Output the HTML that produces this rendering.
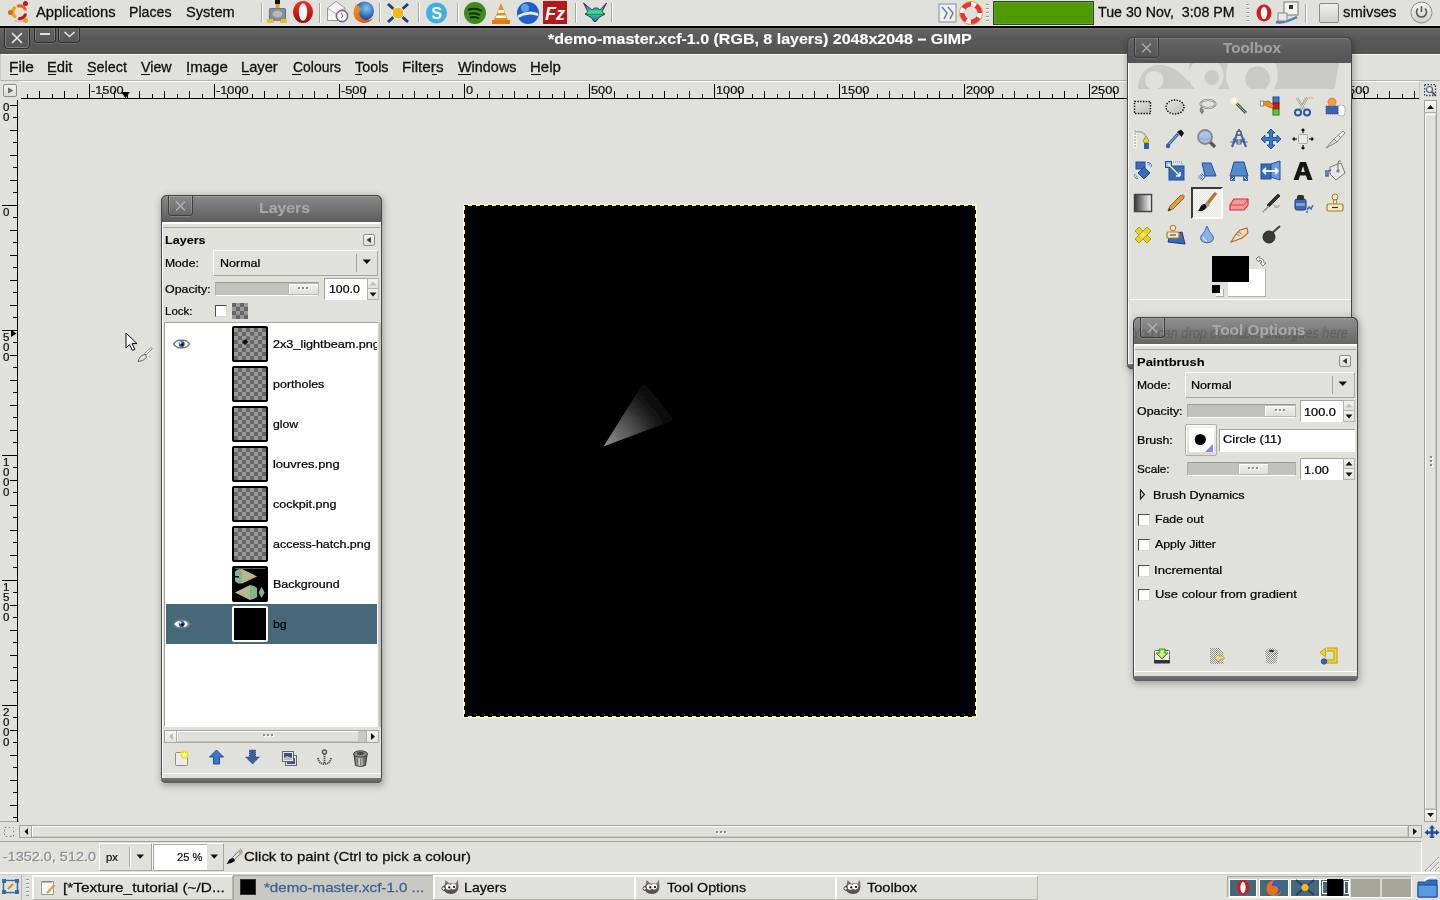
<!DOCTYPE html>
<html><head><meta charset="utf-8"><style>
html,body{margin:0;padding:0;width:1440px;height:900px;overflow:hidden;background:#e1e1dc;}
body{position:relative;font-family:"Liberation Sans",sans-serif;}
.a{position:absolute;box-sizing:border-box;}
.t{position:absolute;line-height:1;white-space:pre;transform-origin:0 0;}
</style></head><body>
<div class="a" style="left:0px;top:0px;width:1440px;height:26px;background:#e1e1dc;border-bottom:1px solid #ecece8;"></div>
<div class="a" style="left:0px;top:26px;width:1440px;height:2px;background:#000;"></div>
<svg class="a" style="left:0px;top:0px;" width="32" height="26" viewBox="0 0 32 26"><ellipse cx="20" cy="21" rx="6" ry="1.5" fill="#000" opacity="0.12"/><path d="M16.5 5.3 A7 7 0 0 1 27 10.5 L24 10.5 A4.3 4.3 0 0 0 17.8 7.9 Z" fill="#e8641a"/><path d="M14.5 6 A7 7 0 0 0 15.5 18.5 L17 16 A4.3 4.3 0 0 1 16.5 8.3 Z" fill="#e8a416"/><path d="M17.5 19.5 A7 7 0 0 0 27 13.5 L24 13.5 A4.3 4.3 0 0 1 18.8 16.9 Z" fill="#c8102e"/><circle cx="25.5" cy="3.5" r="2.5" fill="#c8102e"/><circle cx="10.4" cy="12.4" r="2.5" fill="#e8641a"/><circle cx="25.5" cy="20.4" r="2.5" fill="#e8a416"/></svg>
<div class="t" style="left:36.00px;top:5.00px;font-size:14px;font-weight:400;color:#101010;transform:scaleX(1.0531);-webkit-text-stroke:0.29px currentColor;">Applications</div>
<div class="t" style="left:128.99px;top:5.00px;font-size:14px;font-weight:400;color:#101010;transform:scaleX(1.0117);-webkit-text-stroke:0.29px currentColor;">Places</div>
<div class="t" style="left:186.00px;top:5.00px;font-size:14px;font-weight:400;color:#101010;transform:scaleX(1.0432);-webkit-text-stroke:0.29px currentColor;">System</div>
<div class="a" style="left:261px;top:3px;width:1px;height:20px;background:#a9a8a2;border-right:1px solid #fff;width:2px;"></div>
<div class="a" style="left:319px;top:3px;width:1px;height:20px;background:#a9a8a2;border-right:1px solid #fff;width:2px;"></div>
<div class="a" style="left:379px;top:3px;width:1px;height:20px;background:#a9a8a2;border-right:1px solid #fff;width:2px;"></div>
<div class="a" style="left:418px;top:3px;width:1px;height:20px;background:#a9a8a2;border-right:1px solid #fff;width:2px;"></div>
<div class="a" style="left:457px;top:3px;width:1px;height:20px;background:#a9a8a2;border-right:1px solid #fff;width:2px;"></div>
<div class="a" style="left:575px;top:3px;width:1px;height:20px;background:#a9a8a2;border-right:1px solid #fff;width:2px;"></div>
<div class="a" style="left:611px;top:3px;width:1px;height:20px;background:#a9a8a2;border-right:1px solid #fff;width:2px;"></div>
<svg class="a" style="left:266px;top:0px;" width="22" height="25" viewBox="0 0 22 25"><rect x="9" y="0" width="5" height="4" fill="#111"/><rect x="9.5" y="4" width="4" height="4" fill="#c8a820"/><rect x="3.5" y="8.5" width="16" height="11" rx="1" fill="#8a8e90" stroke="#5a7aa8" stroke-width="1.2"/><ellipse cx="11.5" cy="14" rx="5" ry="3.5" fill="#b8b8b8"/><rect x="1" y="19" width="7" height="4" rx="1" fill="#e8c020"/><rect x="14" y="19" width="7" height="4" rx="1" fill="#e8c020"/><rect x="7" y="19" width="8" height="2" fill="#888"/></svg>
<svg class="a" style="left:292px;top:0px;" width="22" height="25" viewBox="0 0 22 25"><defs><linearGradient id="og" x1="0" y1="0" x2="0" y2="1"><stop offset="0" stop-color="#ff2a2a"/><stop offset="1" stop-color="#a00808"/></linearGradient></defs><ellipse cx="11" cy="12" rx="10" ry="11" fill="url(#og)"/><ellipse cx="11" cy="12" rx="4.2" ry="8.8" fill="#fbf4f4"/></svg>
<svg class="a" style="left:326px;top:0px;" width="24" height="25" viewBox="0 0 24 25"><path d="M1.5 8 L10 1.5 L19 8 L19 20.5 L1.5 20.5 Z" fill="#f4f4f2" stroke="#999" stroke-width="1"/><path d="M1.5 8 L10 14 L19 8" stroke="#aaa" fill="none"/><circle cx="16" cy="16" r="5.6" fill="#fafafa" stroke="#8a5aaa" stroke-width="1.6"/><path d="M15 13 L17 16 L15 18" stroke="#555" stroke-width="0.9" fill="none"/></svg>
<svg class="a" style="left:351px;top:0px;" width="25" height="25" viewBox="0 0 25 25"><defs><radialGradient id="ffg" cx="0.6" cy="0.35" r="0.6"><stop offset="0" stop-color="#7ac8f0"/><stop offset="1" stop-color="#1a4aa8"/></radialGradient><linearGradient id="ffo" x1="0" y1="0" x2="1" y2="1"><stop offset="0" stop-color="#f0a020"/><stop offset="1" stop-color="#d8400a"/></linearGradient></defs><circle cx="13.5" cy="11" r="9.5" fill="url(#ffg)"/><path d="M5 4 Q2 9 2.5 14 Q4 22 12.5 23 Q21 23 23.5 15 Q23 19 18 20 Q11 21 8.5 15 Q7.5 11 11 9 Q8 8 8 5 Q6.5 6.5 6 6 Z" fill="url(#ffo)"/></svg>
<svg class="a" style="left:385px;top:1px;" width="26" height="24" viewBox="0 0 26 24"><path d="M3 3 L23 21 M23 3 L3 21" stroke="#1f3f7a" stroke-width="3"/><circle cx="13" cy="12" r="6" fill="#f3b71b" stroke="#fff" stroke-width="1"/></svg>
<svg class="a" style="left:424px;top:1px;" width="25" height="24" viewBox="0 0 25 24"><circle cx="12.5" cy="12" r="10.5" fill="#3db0e8"/><text x="12.5" y="18" font-family="Liberation Sans" font-weight="700" font-size="16" fill="#fff" text-anchor="middle">S</text></svg>
<svg class="a" style="left:463px;top:1px;" width="24" height="24" viewBox="0 0 24 24"><circle cx="12" cy="12" r="11" fill="#3e8a1c"/><path d="M5 9 Q12 6 19 10 M6 13 Q12 11 17 14 M7 16.5 Q12 15 16 17.5" stroke="#112b06" stroke-width="2" fill="none"/></svg>
<svg class="a" style="left:491px;top:1px;" width="20" height="24" viewBox="0 0 20 24"><path d="M10 2 L17 19 L3 19 Z" fill="#f28a16"/><path d="M7.5 9 L12.5 9 L13.5 12 L6.5 12 Z M5.5 14.5 L14.5 14.5 L15.5 17 L4.5 17Z" fill="#fff"/><rect x="1" y="19" width="18" height="4" fill="#e07a10"/></svg>
<svg class="a" style="left:516px;top:1px;" width="24" height="24" viewBox="0 0 24 24"><circle cx="12" cy="12" r="11" fill="#1e5fc8"/><path d="M2 14 Q12 8 22 12 L22 15 Q12 11 2 17Z" fill="#fff" opacity="0.85"/><circle cx="9" cy="7" r="4" fill="#8fc4ff" opacity="0.6"/></svg>
<svg class="a" style="left:543px;top:1px;" width="24" height="24" viewBox="0 0 24 24"><rect x="0" y="0" width="24" height="23" fill="#b41818"/><text x="12" y="19" font-family="Liberation Sans" font-style="italic" font-weight="700" font-size="18" fill="#fff" text-anchor="middle">Fz</text></svg>
<svg class="a" style="left:582px;top:2px;" width="26" height="20" viewBox="0 0 26 20"><defs><linearGradient id="bd" x1="0" y1="0" x2="0" y2="1"><stop offset="0" stop-color="#3a2ad0"/><stop offset="0.5" stop-color="#3ee0b0"/><stop offset="1" stop-color="#2a60a0"/></linearGradient></defs><path d="M1.5 1 L10 8 L12.5 6 L15.5 6 L18 8 L24.5 1 L20 10 L23 12 L17 15.5 L14 19.5 L12 19.5 L9 15.5 L3 12 L6 10 Z" fill="url(#bd)" stroke="#1a2a30" stroke-width="0.8"/><path d="M4 12 L22 12" stroke="#1a3a20" stroke-width="1.2"/><path d="M5 11.5 L21 11.5" stroke="#40d060" stroke-width="1.6"/></svg>
<svg class="a" style="left:938px;top:3px;" width="19" height="20" viewBox="0 0 19 20"><rect x="1" y="1" width="17" height="18" fill="#f0f0f0" stroke="#7d8ca8"/><path d="M4 4 L9 10 L6 16 M10 4 L15 10 L12 16" stroke="#6a7a9a" stroke-width="1.5" fill="none"/></svg>
<svg class="a" style="left:959px;top:1px;" width="24" height="24" viewBox="0 0 24 24"><circle cx="12" cy="12" r="9" fill="none" stroke="#e33" stroke-width="5"/><circle cx="12" cy="12" r="9" fill="none" stroke="#fff" stroke-width="5" stroke-dasharray="5 9.1"/><circle cx="12" cy="12" r="11.5" fill="none" stroke="#d9b040" stroke-width="1"/></svg>
<div class="a" style="left:986px;top:4px;width:3px;height:18px;background:repeating-linear-gradient(#999 0 1px,#fff 1px 2px,transparent 2px 4px);"></div>
<div class="a" style="left:993px;top:1px;width:101px;height:24px;background:#4e9a06;border:1px solid #3b3b3b;box-shadow:inset 0 0 0 1px #5aa80a;"></div>
<div class="t" style="left:1098.00px;top:5.00px;font-size:14px;font-weight:400;color:#101010;transform:scaleX(1.0152);-webkit-text-stroke:0.29px currentColor;">Tue 30 Nov,  3:08 PM</div>
<div class="a" style="left:1246px;top:4px;width:3px;height:18px;background:repeating-linear-gradient(#999 0 1px,#fff 1px 2px,transparent 2px 4px);"></div>
<svg class="a" style="left:1255px;top:4px;" width="18" height="18" viewBox="0 0 18 18"><ellipse cx="9" cy="9" rx="7.5" ry="8.5" fill="#d31a1a"/><ellipse cx="9" cy="9" rx="3.2" ry="6.3" fill="#fff"/></svg>
<svg class="a" style="left:1275px;top:1px;" width="25" height="24" viewBox="0 0 25 24"><rect x="9" y="1" width="14" height="13" fill="#f4f4f4" stroke="#777"/><rect x="14" y="4" width="4" height="4" fill="#333"/><path d="M1 21 Q8 23 22 16" stroke="#4a7ac0" stroke-width="2.5" fill="none"/><rect x="3" y="12" width="9" height="8" fill="#e8e8e8" stroke="#888"/></svg>
<div class="a" style="left:1305px;top:4px;width:2px;height:19px;background:#a9a8a2;border-right:1px solid #fff;"></div>
<div class="a" style="left:1319px;top:3px;width:20px;height:20px;background:linear-gradient(#f0f0ee,#cfcfca);border:1px solid #8a8a84;border-radius:2px;"></div>
<div class="t" style="left:1343.00px;top:5.00px;font-size:14px;font-weight:400;color:#101010;transform:scaleX(1.0582);-webkit-text-stroke:0.29px currentColor;">smivses</div>
<svg class="a" style="left:1410px;top:1px;" width="24" height="24" viewBox="0 0 24 24"><circle cx="11.5" cy="11.5" r="10.5" fill="url(#pg)" stroke="#8c8c86"/><defs><linearGradient id="pg" x1="0" y1="0" x2="0" y2="1"><stop offset="0" stop-color="#f8f8f6"/><stop offset="1" stop-color="#cfcfca"/></linearGradient></defs><path d="M8 7.5 A5 5 0 1 0 15 7.5" stroke="#555" stroke-width="1.6" fill="none"/><path d="M11.5 5 V11" stroke="#555" stroke-width="1.6"/></svg>
<div class="a" style="left:0px;top:28px;width:1440px;height:26px;background:linear-gradient(#636363,#595959 40%,#545454);border-top:1px solid #6e6e6e;"></div>
<div class="t" style="left:548.00px;top:32.00px;font-size:14.5px;font-weight:700;color:#ffffff;transform:scaleX(1.1043);-webkit-text-stroke:0.12px currentColor;">*demo-master.xcf-1.0 (RGB, 8 layers) 2048x2048 – GIMP</div>
<div class="a" style="left:4px;top:28px;width:26px;height:21px;border:1px solid #2e2e2e;border-top:none;border-radius:0 0 4px 4px;box-shadow:inset 1px 0 0 #7a7a7a,inset -1px 0 0 #7a7a7a,inset 0 -1px 0 #787878,0 1px 0 #6f6f6f;"></div>
<svg class="a" style="left:9px;top:30px;" width="16" height="16" viewBox="0 0 16 16"><path d="M3 3 L13 13 M13 3 L3 13" stroke="#e8e8e8" stroke-width="1.6"/></svg>
<div class="a" style="left:34px;top:28px;width:22px;height:15px;border:1px solid #2e2e2e;border-top:none;border-radius:0 0 4px 4px;box-shadow:inset 1px 0 0 #7a7a7a,inset -1px 0 0 #7a7a7a,0 1px 0 #6f6f6f;"></div>
<div class="a" style="left:40px;top:33px;width:10px;height:2px;background:#e0e0e0;"></div>
<div class="a" style="left:58px;top:28px;width:22px;height:15px;border:1px solid #2e2e2e;border-top:none;border-radius:0 0 4px 4px;box-shadow:inset 1px 0 0 #7a7a7a,inset -1px 0 0 #7a7a7a,0 1px 0 #6f6f6f;"></div>
<svg class="a" style="left:62.5px;top:30px;" width="13" height="9" viewBox="0 0 13 9"><path d="M1.5 2 L6.5 6.5 L11.5 2" stroke="#e0e0e0" stroke-width="1.6" fill="none"/></svg>
<div class="a" style="left:0px;top:54px;width:1440px;height:27px;background:#e1e1dc;border-top:1px solid #fbfbfa;border-bottom:1px solid #b4b4ad;"></div>
<div class="a" style="left:0px;top:54px;width:1px;height:27px;background:#c9c9c4;"></div>
<div class="t" style="left:8.90px;top:60.00px;font-size:14px;font-weight:400;color:#101010;transform:scaleX(1.1023);-webkit-text-stroke:0.29px currentColor;">File</div>
<div class="t" style="left:47.45px;top:60.00px;font-size:14px;font-weight:400;color:#101010;transform:scaleX(1.0545);-webkit-text-stroke:0.29px currentColor;">Edit</div>
<div class="t" style="left:87.00px;top:60.00px;font-size:14px;font-weight:400;color:#101010;transform:scaleX(1.0251);-webkit-text-stroke:0.29px currentColor;">Select</div>
<div class="t" style="left:141.00px;top:60.00px;font-size:14px;font-weight:400;color:#101010;transform:scaleX(1.0167);-webkit-text-stroke:0.29px currentColor;">View</div>
<div class="t" style="left:185.92px;top:60.00px;font-size:14px;font-weight:400;color:#101010;transform:scaleX(1.0754);-webkit-text-stroke:0.29px currentColor;">Image</div>
<div class="t" style="left:240.95px;top:60.00px;font-size:14px;font-weight:400;color:#101010;transform:scaleX(1.0478);-webkit-text-stroke:0.29px currentColor;">Layer</div>
<div class="t" style="left:292.50px;top:60.00px;font-size:14px;font-weight:400;color:#101010;transform:scaleX(0.9950);-webkit-text-stroke:0.29px currentColor;">Colours</div>
<div class="t" style="left:355.00px;top:60.00px;font-size:14px;font-weight:400;color:#101010;transform:scaleX(1.0250);-webkit-text-stroke:0.29px currentColor;">Tools</div>
<div class="t" style="left:401.91px;top:60.00px;font-size:14px;font-weight:400;color:#101010;transform:scaleX(1.0913);-webkit-text-stroke:0.29px currentColor;">Filters</div>
<div class="t" style="left:458.00px;top:60.00px;font-size:14px;font-weight:400;color:#101010;transform:scaleX(1.0301);-webkit-text-stroke:0.29px currentColor;">Windows</div>
<div class="t" style="left:529.93px;top:60.00px;font-size:14px;font-weight:400;color:#101010;transform:scaleX(1.0712);-webkit-text-stroke:0.29px currentColor;">Help</div>
<div class="a" style="left:10px;top:74px;width:8px;height:1px;background:#101010;"></div>
<div class="a" style="left:48px;top:74px;width:8px;height:1px;background:#101010;"></div>
<div class="a" style="left:87px;top:74px;width:8px;height:1px;background:#101010;"></div>
<div class="a" style="left:141px;top:74px;width:8.5px;height:1px;background:#101010;"></div>
<div class="a" style="left:187px;top:74px;width:4px;height:1px;background:#101010;"></div>
<div class="a" style="left:242px;top:74px;width:7.5px;height:1px;background:#101010;"></div>
<div class="a" style="left:292px;top:74px;width:9px;height:1px;background:#101010;"></div>
<div class="a" style="left:355px;top:74px;width:7px;height:1px;background:#101010;"></div>
<div class="a" style="left:432px;top:74px;width:5px;height:1px;background:#101010;"></div>
<div class="a" style="left:458px;top:74px;width:12.5px;height:1px;background:#101010;"></div>
<div class="a" style="left:531px;top:74px;width:9.5px;height:1px;background:#101010;"></div>
<div class="a" style="left:0px;top:81px;width:20px;height:19px;background:#e1e1dc;"></div>
<div class="a" style="left:3px;top:84px;width:14px;height:13px;border:1px solid #8d8d87;border-radius:2px;background:linear-gradient(#f2f2ef,#dcdcd6);"></div>
<svg class="a" style="left:6px;top:86px;" width="9" height="9" viewBox="0 0 9 9"><path d="M2 1.5 L7.5 4.5 L2 7.5 Z" fill="#6a6a66"/></svg>
<div class="a" style="left:20px;top:81px;width:1400px;height:19px;background:#e1e1dc;border-top:1px solid #fff;border-right:1px solid #c8c8c2;"></div>
<svg class="a" style="left:20px;top:81px;shape-rendering:crispEdges" width="1400" height="19" viewBox="0 0 1400 19"><rect x="7" y="13" width="1" height="4" fill="#000"/><rect x="19" y="10" width="1" height="7" fill="#000"/><rect x="32" y="13" width="1" height="4" fill="#000"/><rect x="44" y="10" width="1" height="7" fill="#000"/><rect x="57" y="13" width="1" height="4" fill="#000"/><rect x="69" y="3" width="1" height="14" fill="#000"/><rect x="82" y="13" width="1" height="4" fill="#000"/><rect x="94" y="10" width="1" height="7" fill="#000"/><rect x="107" y="13" width="1" height="4" fill="#000"/><rect x="119" y="10" width="1" height="7" fill="#000"/><rect x="132" y="13" width="1" height="4" fill="#000"/><rect x="144" y="10" width="1" height="7" fill="#000"/><rect x="157" y="13" width="1" height="4" fill="#000"/><rect x="169" y="10" width="1" height="7" fill="#000"/><rect x="182" y="13" width="1" height="4" fill="#000"/><rect x="194" y="3" width="1" height="14" fill="#000"/><rect x="207" y="13" width="1" height="4" fill="#000"/><rect x="219" y="10" width="1" height="7" fill="#000"/><rect x="232" y="13" width="1" height="4" fill="#000"/><rect x="244" y="10" width="1" height="7" fill="#000"/><rect x="257" y="13" width="1" height="4" fill="#000"/><rect x="269" y="10" width="1" height="7" fill="#000"/><rect x="282" y="13" width="1" height="4" fill="#000"/><rect x="294" y="10" width="1" height="7" fill="#000"/><rect x="307" y="13" width="1" height="4" fill="#000"/><rect x="319" y="3" width="1" height="14" fill="#000"/><rect x="332" y="13" width="1" height="4" fill="#000"/><rect x="344" y="10" width="1" height="7" fill="#000"/><rect x="357" y="13" width="1" height="4" fill="#000"/><rect x="369" y="10" width="1" height="7" fill="#000"/><rect x="382" y="13" width="1" height="4" fill="#000"/><rect x="394" y="10" width="1" height="7" fill="#000"/><rect x="407" y="13" width="1" height="4" fill="#000"/><rect x="419" y="10" width="1" height="7" fill="#000"/><rect x="432" y="13" width="1" height="4" fill="#000"/><rect x="444" y="3" width="1" height="14" fill="#000"/><rect x="457" y="13" width="1" height="4" fill="#000"/><rect x="469" y="10" width="1" height="7" fill="#000"/><rect x="482" y="13" width="1" height="4" fill="#000"/><rect x="494" y="10" width="1" height="7" fill="#000"/><rect x="507" y="13" width="1" height="4" fill="#000"/><rect x="519" y="10" width="1" height="7" fill="#000"/><rect x="532" y="13" width="1" height="4" fill="#000"/><rect x="544" y="10" width="1" height="7" fill="#000"/><rect x="557" y="13" width="1" height="4" fill="#000"/><rect x="569" y="3" width="1" height="14" fill="#000"/><rect x="582" y="13" width="1" height="4" fill="#000"/><rect x="594" y="10" width="1" height="7" fill="#000"/><rect x="607" y="13" width="1" height="4" fill="#000"/><rect x="619" y="10" width="1" height="7" fill="#000"/><rect x="632" y="13" width="1" height="4" fill="#000"/><rect x="644" y="10" width="1" height="7" fill="#000"/><rect x="657" y="13" width="1" height="4" fill="#000"/><rect x="669" y="10" width="1" height="7" fill="#000"/><rect x="682" y="13" width="1" height="4" fill="#000"/><rect x="694" y="3" width="1" height="14" fill="#000"/><rect x="707" y="13" width="1" height="4" fill="#000"/><rect x="719" y="10" width="1" height="7" fill="#000"/><rect x="732" y="13" width="1" height="4" fill="#000"/><rect x="744" y="10" width="1" height="7" fill="#000"/><rect x="757" y="13" width="1" height="4" fill="#000"/><rect x="769" y="10" width="1" height="7" fill="#000"/><rect x="782" y="13" width="1" height="4" fill="#000"/><rect x="794" y="10" width="1" height="7" fill="#000"/><rect x="807" y="13" width="1" height="4" fill="#000"/><rect x="819" y="3" width="1" height="14" fill="#000"/><rect x="832" y="13" width="1" height="4" fill="#000"/><rect x="844" y="10" width="1" height="7" fill="#000"/><rect x="857" y="13" width="1" height="4" fill="#000"/><rect x="869" y="10" width="1" height="7" fill="#000"/><rect x="882" y="13" width="1" height="4" fill="#000"/><rect x="894" y="10" width="1" height="7" fill="#000"/><rect x="907" y="13" width="1" height="4" fill="#000"/><rect x="919" y="10" width="1" height="7" fill="#000"/><rect x="932" y="13" width="1" height="4" fill="#000"/><rect x="944" y="3" width="1" height="14" fill="#000"/><rect x="957" y="13" width="1" height="4" fill="#000"/><rect x="969" y="10" width="1" height="7" fill="#000"/><rect x="982" y="13" width="1" height="4" fill="#000"/><rect x="994" y="10" width="1" height="7" fill="#000"/><rect x="1007" y="13" width="1" height="4" fill="#000"/><rect x="1019" y="10" width="1" height="7" fill="#000"/><rect x="1032" y="13" width="1" height="4" fill="#000"/><rect x="1044" y="10" width="1" height="7" fill="#000"/><rect x="1057" y="13" width="1" height="4" fill="#000"/><rect x="1069" y="3" width="1" height="14" fill="#000"/><rect x="1082" y="13" width="1" height="4" fill="#000"/><rect x="1094" y="10" width="1" height="7" fill="#000"/><rect x="1107" y="13" width="1" height="4" fill="#000"/><rect x="1119" y="10" width="1" height="7" fill="#000"/><rect x="1132" y="13" width="1" height="4" fill="#000"/><rect x="1144" y="10" width="1" height="7" fill="#000"/><rect x="1157" y="13" width="1" height="4" fill="#000"/><rect x="1169" y="10" width="1" height="7" fill="#000"/><rect x="1182" y="13" width="1" height="4" fill="#000"/><rect x="1194" y="3" width="1" height="14" fill="#000"/><rect x="1207" y="13" width="1" height="4" fill="#000"/><rect x="1219" y="10" width="1" height="7" fill="#000"/><rect x="1232" y="13" width="1" height="4" fill="#000"/><rect x="1244" y="10" width="1" height="7" fill="#000"/><rect x="1257" y="13" width="1" height="4" fill="#000"/><rect x="1269" y="10" width="1" height="7" fill="#000"/><rect x="1282" y="13" width="1" height="4" fill="#000"/><rect x="1294" y="10" width="1" height="7" fill="#000"/><rect x="1307" y="13" width="1" height="4" fill="#000"/><rect x="1319" y="3" width="1" height="14" fill="#000"/><rect x="1332" y="13" width="1" height="4" fill="#000"/><rect x="1344" y="10" width="1" height="7" fill="#000"/><rect x="1357" y="13" width="1" height="4" fill="#000"/><rect x="1369" y="10" width="1" height="7" fill="#000"/><rect x="1382" y="13" width="1" height="4" fill="#000"/><rect x="1394" y="10" width="1" height="7" fill="#000"/><rect x="1" y="17" width="1398" height="1" fill="#000"/></svg>
<div class="t" style="left:91.00px;top:85.00px;font-size:11px;font-weight:400;color:#101010;transform:scaleX(1.1600);-webkit-text-stroke:0.23px currentColor;">-1500</div>
<div class="t" style="left:216.00px;top:85.00px;font-size:11px;font-weight:400;color:#101010;transform:scaleX(1.1600);-webkit-text-stroke:0.23px currentColor;">-1000</div>
<div class="t" style="left:341.00px;top:85.00px;font-size:11px;font-weight:400;color:#101010;transform:scaleX(1.1600);-webkit-text-stroke:0.23px currentColor;">-500</div>
<div class="t" style="left:466.00px;top:85.00px;font-size:11px;font-weight:400;color:#101010;transform:scaleX(1.1600);-webkit-text-stroke:0.23px currentColor;">0</div>
<div class="t" style="left:591.00px;top:85.00px;font-size:11px;font-weight:400;color:#101010;transform:scaleX(1.1600);-webkit-text-stroke:0.23px currentColor;">500</div>
<div class="t" style="left:716.00px;top:85.00px;font-size:11px;font-weight:400;color:#101010;transform:scaleX(1.1600);-webkit-text-stroke:0.23px currentColor;">1000</div>
<div class="t" style="left:841.00px;top:85.00px;font-size:11px;font-weight:400;color:#101010;transform:scaleX(1.1600);-webkit-text-stroke:0.23px currentColor;">1500</div>
<div class="t" style="left:966.00px;top:85.00px;font-size:11px;font-weight:400;color:#101010;transform:scaleX(1.1600);-webkit-text-stroke:0.23px currentColor;">2000</div>
<div class="t" style="left:1091.00px;top:85.00px;font-size:11px;font-weight:400;color:#101010;transform:scaleX(1.1600);-webkit-text-stroke:0.23px currentColor;">2500</div>
<div class="t" style="left:1216.00px;top:85.00px;font-size:11px;font-weight:400;color:#101010;transform:scaleX(1.1600);-webkit-text-stroke:0.23px currentColor;">3000</div>
<div class="t" style="left:1341.00px;top:85.00px;font-size:11px;font-weight:400;color:#101010;transform:scaleX(1.1600);-webkit-text-stroke:0.23px currentColor;">3500</div>
<svg class="a" style="left:121px;top:92px;" width="10" height="7" viewBox="0 0 10 7"><path d="M0 0 L9 0 L4.5 6 Z" fill="#000"/></svg>
<div class="a" style="left:0px;top:100px;width:19px;height:722px;background:#e1e1dc;border-bottom:1px solid #a3a39c;"></div>
<svg class="a" style="left:0px;top:100px;shape-rendering:crispEdges" width="19" height="722" viewBox="0 0 19 722"><rect x="10" y="5" width="7" height="1" fill="#000"/><rect x="13" y="17" width="4" height="1" fill="#000"/><rect x="10" y="30" width="7" height="1" fill="#000"/><rect x="13" y="42" width="4" height="1" fill="#000"/><rect x="10" y="55" width="7" height="1" fill="#000"/><rect x="13" y="67" width="4" height="1" fill="#000"/><rect x="10" y="80" width="7" height="1" fill="#000"/><rect x="13" y="92" width="4" height="1" fill="#000"/><rect x="2" y="105" width="15" height="1" fill="#000"/><rect x="13" y="117" width="4" height="1" fill="#000"/><rect x="10" y="130" width="7" height="1" fill="#000"/><rect x="13" y="142" width="4" height="1" fill="#000"/><rect x="10" y="155" width="7" height="1" fill="#000"/><rect x="13" y="167" width="4" height="1" fill="#000"/><rect x="10" y="180" width="7" height="1" fill="#000"/><rect x="13" y="192" width="4" height="1" fill="#000"/><rect x="10" y="205" width="7" height="1" fill="#000"/><rect x="13" y="217" width="4" height="1" fill="#000"/><rect x="2" y="230" width="15" height="1" fill="#000"/><rect x="13" y="242" width="4" height="1" fill="#000"/><rect x="10" y="255" width="7" height="1" fill="#000"/><rect x="13" y="267" width="4" height="1" fill="#000"/><rect x="10" y="280" width="7" height="1" fill="#000"/><rect x="13" y="292" width="4" height="1" fill="#000"/><rect x="10" y="305" width="7" height="1" fill="#000"/><rect x="13" y="317" width="4" height="1" fill="#000"/><rect x="10" y="330" width="7" height="1" fill="#000"/><rect x="13" y="342" width="4" height="1" fill="#000"/><rect x="2" y="355" width="15" height="1" fill="#000"/><rect x="13" y="367" width="4" height="1" fill="#000"/><rect x="10" y="380" width="7" height="1" fill="#000"/><rect x="13" y="392" width="4" height="1" fill="#000"/><rect x="10" y="405" width="7" height="1" fill="#000"/><rect x="13" y="417" width="4" height="1" fill="#000"/><rect x="10" y="430" width="7" height="1" fill="#000"/><rect x="13" y="442" width="4" height="1" fill="#000"/><rect x="10" y="455" width="7" height="1" fill="#000"/><rect x="13" y="467" width="4" height="1" fill="#000"/><rect x="2" y="480" width="15" height="1" fill="#000"/><rect x="13" y="492" width="4" height="1" fill="#000"/><rect x="10" y="505" width="7" height="1" fill="#000"/><rect x="13" y="517" width="4" height="1" fill="#000"/><rect x="10" y="530" width="7" height="1" fill="#000"/><rect x="13" y="542" width="4" height="1" fill="#000"/><rect x="10" y="555" width="7" height="1" fill="#000"/><rect x="13" y="567" width="4" height="1" fill="#000"/><rect x="10" y="580" width="7" height="1" fill="#000"/><rect x="13" y="592" width="4" height="1" fill="#000"/><rect x="2" y="605" width="15" height="1" fill="#000"/><rect x="13" y="617" width="4" height="1" fill="#000"/><rect x="10" y="630" width="7" height="1" fill="#000"/><rect x="13" y="642" width="4" height="1" fill="#000"/><rect x="10" y="655" width="7" height="1" fill="#000"/><rect x="13" y="667" width="4" height="1" fill="#000"/><rect x="10" y="680" width="7" height="1" fill="#000"/><rect x="13" y="692" width="4" height="1" fill="#000"/><rect x="10" y="705" width="7" height="1" fill="#000"/><rect x="13" y="717" width="4" height="1" fill="#000"/><rect x="17" y="0" width="1" height="722" fill="#000"/></svg>
<div class="t" style="left:3.00px;top:102.00px;font-size:11px;font-weight:400;color:#101010;transform:scaleX(1.0500);-webkit-text-stroke:0.23px currentColor;">0</div>
<div class="t" style="left:3.00px;top:112.00px;font-size:11px;font-weight:400;color:#101010;transform:scaleX(1.0500);-webkit-text-stroke:0.23px currentColor;">0</div>
<div class="t" style="left:3.00px;top:207.00px;font-size:11px;font-weight:400;color:#101010;transform:scaleX(1.0500);-webkit-text-stroke:0.23px currentColor;">0</div>
<div class="t" style="left:3.00px;top:332.00px;font-size:11px;font-weight:400;color:#101010;transform:scaleX(1.0500);-webkit-text-stroke:0.23px currentColor;">5</div>
<div class="t" style="left:3.00px;top:342.00px;font-size:11px;font-weight:400;color:#101010;transform:scaleX(1.0500);-webkit-text-stroke:0.23px currentColor;">0</div>
<div class="t" style="left:3.00px;top:352.00px;font-size:11px;font-weight:400;color:#101010;transform:scaleX(1.0500);-webkit-text-stroke:0.23px currentColor;">0</div>
<div class="t" style="left:3.00px;top:457.00px;font-size:11px;font-weight:400;color:#101010;transform:scaleX(1.0500);-webkit-text-stroke:0.23px currentColor;">1</div>
<div class="t" style="left:3.00px;top:467.00px;font-size:11px;font-weight:400;color:#101010;transform:scaleX(1.0500);-webkit-text-stroke:0.23px currentColor;">0</div>
<div class="t" style="left:3.00px;top:477.00px;font-size:11px;font-weight:400;color:#101010;transform:scaleX(1.0500);-webkit-text-stroke:0.23px currentColor;">0</div>
<div class="t" style="left:3.00px;top:487.00px;font-size:11px;font-weight:400;color:#101010;transform:scaleX(1.0500);-webkit-text-stroke:0.23px currentColor;">0</div>
<div class="t" style="left:3.00px;top:582.00px;font-size:11px;font-weight:400;color:#101010;transform:scaleX(1.0500);-webkit-text-stroke:0.23px currentColor;">1</div>
<div class="t" style="left:3.00px;top:592.00px;font-size:11px;font-weight:400;color:#101010;transform:scaleX(1.0500);-webkit-text-stroke:0.23px currentColor;">5</div>
<div class="t" style="left:3.00px;top:602.00px;font-size:11px;font-weight:400;color:#101010;transform:scaleX(1.0500);-webkit-text-stroke:0.23px currentColor;">0</div>
<div class="t" style="left:3.00px;top:612.00px;font-size:11px;font-weight:400;color:#101010;transform:scaleX(1.0500);-webkit-text-stroke:0.23px currentColor;">0</div>
<div class="t" style="left:3.00px;top:707.00px;font-size:11px;font-weight:400;color:#101010;transform:scaleX(1.0500);-webkit-text-stroke:0.23px currentColor;">2</div>
<div class="t" style="left:3.00px;top:717.00px;font-size:11px;font-weight:400;color:#101010;transform:scaleX(1.0500);-webkit-text-stroke:0.23px currentColor;">0</div>
<div class="t" style="left:3.00px;top:727.00px;font-size:11px;font-weight:400;color:#101010;transform:scaleX(1.0500);-webkit-text-stroke:0.23px currentColor;">0</div>
<div class="t" style="left:3.00px;top:737.00px;font-size:11px;font-weight:400;color:#101010;transform:scaleX(1.0500);-webkit-text-stroke:0.23px currentColor;">0</div>
<svg class="a" style="left:11px;top:330px;" width="6" height="8" viewBox="0 0 6 8"><path d="M0 0 L5.5 3.5 L0 7 Z" fill="#000"/></svg>
<div class="a" style="left:19px;top:100px;width:1403px;height:722px;background:#e1e1dc;"></div>
<div class="a" style="left:463px;top:204px;width:514px;height:514px;border:1px solid #f4f4f8;background:#000;"></div>
<svg class="a" style="left:464px;top:205px;" width="512" height="512" viewBox="0 0 512 512"><rect x="4" y="0" width="4" height="1" fill="#ff0"/><rect x="4" y="511" width="4" height="1" fill="#ff0"/><rect x="12" y="0" width="4" height="1" fill="#ff0"/><rect x="12" y="511" width="4" height="1" fill="#ff0"/><rect x="20" y="0" width="4" height="1" fill="#ff0"/><rect x="20" y="511" width="4" height="1" fill="#ff0"/><rect x="28" y="0" width="4" height="1" fill="#ff0"/><rect x="28" y="511" width="4" height="1" fill="#ff0"/><rect x="36" y="0" width="4" height="1" fill="#ff0"/><rect x="36" y="511" width="4" height="1" fill="#ff0"/><rect x="44" y="0" width="4" height="1" fill="#ff0"/><rect x="44" y="511" width="4" height="1" fill="#ff0"/><rect x="52" y="0" width="4" height="1" fill="#ff0"/><rect x="52" y="511" width="4" height="1" fill="#ff0"/><rect x="60" y="0" width="4" height="1" fill="#ff0"/><rect x="60" y="511" width="4" height="1" fill="#ff0"/><rect x="68" y="0" width="4" height="1" fill="#ff0"/><rect x="68" y="511" width="4" height="1" fill="#ff0"/><rect x="76" y="0" width="4" height="1" fill="#ff0"/><rect x="76" y="511" width="4" height="1" fill="#ff0"/><rect x="84" y="0" width="4" height="1" fill="#ff0"/><rect x="84" y="511" width="4" height="1" fill="#ff0"/><rect x="92" y="0" width="4" height="1" fill="#ff0"/><rect x="92" y="511" width="4" height="1" fill="#ff0"/><rect x="100" y="0" width="4" height="1" fill="#ff0"/><rect x="100" y="511" width="4" height="1" fill="#ff0"/><rect x="108" y="0" width="4" height="1" fill="#ff0"/><rect x="108" y="511" width="4" height="1" fill="#ff0"/><rect x="116" y="0" width="4" height="1" fill="#ff0"/><rect x="116" y="511" width="4" height="1" fill="#ff0"/><rect x="124" y="0" width="4" height="1" fill="#ff0"/><rect x="124" y="511" width="4" height="1" fill="#ff0"/><rect x="132" y="0" width="4" height="1" fill="#ff0"/><rect x="132" y="511" width="4" height="1" fill="#ff0"/><rect x="140" y="0" width="4" height="1" fill="#ff0"/><rect x="140" y="511" width="4" height="1" fill="#ff0"/><rect x="148" y="0" width="4" height="1" fill="#ff0"/><rect x="148" y="511" width="4" height="1" fill="#ff0"/><rect x="156" y="0" width="4" height="1" fill="#ff0"/><rect x="156" y="511" width="4" height="1" fill="#ff0"/><rect x="164" y="0" width="4" height="1" fill="#ff0"/><rect x="164" y="511" width="4" height="1" fill="#ff0"/><rect x="172" y="0" width="4" height="1" fill="#ff0"/><rect x="172" y="511" width="4" height="1" fill="#ff0"/><rect x="180" y="0" width="4" height="1" fill="#ff0"/><rect x="180" y="511" width="4" height="1" fill="#ff0"/><rect x="188" y="0" width="4" height="1" fill="#ff0"/><rect x="188" y="511" width="4" height="1" fill="#ff0"/><rect x="196" y="0" width="4" height="1" fill="#ff0"/><rect x="196" y="511" width="4" height="1" fill="#ff0"/><rect x="204" y="0" width="4" height="1" fill="#ff0"/><rect x="204" y="511" width="4" height="1" fill="#ff0"/><rect x="212" y="0" width="4" height="1" fill="#ff0"/><rect x="212" y="511" width="4" height="1" fill="#ff0"/><rect x="220" y="0" width="4" height="1" fill="#ff0"/><rect x="220" y="511" width="4" height="1" fill="#ff0"/><rect x="228" y="0" width="4" height="1" fill="#ff0"/><rect x="228" y="511" width="4" height="1" fill="#ff0"/><rect x="236" y="0" width="4" height="1" fill="#ff0"/><rect x="236" y="511" width="4" height="1" fill="#ff0"/><rect x="244" y="0" width="4" height="1" fill="#ff0"/><rect x="244" y="511" width="4" height="1" fill="#ff0"/><rect x="252" y="0" width="4" height="1" fill="#ff0"/><rect x="252" y="511" width="4" height="1" fill="#ff0"/><rect x="260" y="0" width="4" height="1" fill="#ff0"/><rect x="260" y="511" width="4" height="1" fill="#ff0"/><rect x="268" y="0" width="4" height="1" fill="#ff0"/><rect x="268" y="511" width="4" height="1" fill="#ff0"/><rect x="276" y="0" width="4" height="1" fill="#ff0"/><rect x="276" y="511" width="4" height="1" fill="#ff0"/><rect x="284" y="0" width="4" height="1" fill="#ff0"/><rect x="284" y="511" width="4" height="1" fill="#ff0"/><rect x="292" y="0" width="4" height="1" fill="#ff0"/><rect x="292" y="511" width="4" height="1" fill="#ff0"/><rect x="300" y="0" width="4" height="1" fill="#ff0"/><rect x="300" y="511" width="4" height="1" fill="#ff0"/><rect x="308" y="0" width="4" height="1" fill="#ff0"/><rect x="308" y="511" width="4" height="1" fill="#ff0"/><rect x="316" y="0" width="4" height="1" fill="#ff0"/><rect x="316" y="511" width="4" height="1" fill="#ff0"/><rect x="324" y="0" width="4" height="1" fill="#ff0"/><rect x="324" y="511" width="4" height="1" fill="#ff0"/><rect x="332" y="0" width="4" height="1" fill="#ff0"/><rect x="332" y="511" width="4" height="1" fill="#ff0"/><rect x="340" y="0" width="4" height="1" fill="#ff0"/><rect x="340" y="511" width="4" height="1" fill="#ff0"/><rect x="348" y="0" width="4" height="1" fill="#ff0"/><rect x="348" y="511" width="4" height="1" fill="#ff0"/><rect x="356" y="0" width="4" height="1" fill="#ff0"/><rect x="356" y="511" width="4" height="1" fill="#ff0"/><rect x="364" y="0" width="4" height="1" fill="#ff0"/><rect x="364" y="511" width="4" height="1" fill="#ff0"/><rect x="372" y="0" width="4" height="1" fill="#ff0"/><rect x="372" y="511" width="4" height="1" fill="#ff0"/><rect x="380" y="0" width="4" height="1" fill="#ff0"/><rect x="380" y="511" width="4" height="1" fill="#ff0"/><rect x="388" y="0" width="4" height="1" fill="#ff0"/><rect x="388" y="511" width="4" height="1" fill="#ff0"/><rect x="396" y="0" width="4" height="1" fill="#ff0"/><rect x="396" y="511" width="4" height="1" fill="#ff0"/><rect x="404" y="0" width="4" height="1" fill="#ff0"/><rect x="404" y="511" width="4" height="1" fill="#ff0"/><rect x="412" y="0" width="4" height="1" fill="#ff0"/><rect x="412" y="511" width="4" height="1" fill="#ff0"/><rect x="420" y="0" width="4" height="1" fill="#ff0"/><rect x="420" y="511" width="4" height="1" fill="#ff0"/><rect x="428" y="0" width="4" height="1" fill="#ff0"/><rect x="428" y="511" width="4" height="1" fill="#ff0"/><rect x="436" y="0" width="4" height="1" fill="#ff0"/><rect x="436" y="511" width="4" height="1" fill="#ff0"/><rect x="444" y="0" width="4" height="1" fill="#ff0"/><rect x="444" y="511" width="4" height="1" fill="#ff0"/><rect x="452" y="0" width="4" height="1" fill="#ff0"/><rect x="452" y="511" width="4" height="1" fill="#ff0"/><rect x="460" y="0" width="4" height="1" fill="#ff0"/><rect x="460" y="511" width="4" height="1" fill="#ff0"/><rect x="468" y="0" width="4" height="1" fill="#ff0"/><rect x="468" y="511" width="4" height="1" fill="#ff0"/><rect x="476" y="0" width="4" height="1" fill="#ff0"/><rect x="476" y="511" width="4" height="1" fill="#ff0"/><rect x="484" y="0" width="4" height="1" fill="#ff0"/><rect x="484" y="511" width="4" height="1" fill="#ff0"/><rect x="492" y="0" width="4" height="1" fill="#ff0"/><rect x="492" y="511" width="4" height="1" fill="#ff0"/><rect x="500" y="0" width="4" height="1" fill="#ff0"/><rect x="500" y="511" width="4" height="1" fill="#ff0"/><rect x="508" y="0" width="4" height="1" fill="#ff0"/><rect x="508" y="511" width="4" height="1" fill="#ff0"/><rect x="0" y="1" width="1" height="4" fill="#ff0"/><rect x="511" y="1" width="1" height="4" fill="#ff0"/><rect x="0" y="9" width="1" height="4" fill="#ff0"/><rect x="511" y="9" width="1" height="4" fill="#ff0"/><rect x="0" y="17" width="1" height="4" fill="#ff0"/><rect x="511" y="17" width="1" height="4" fill="#ff0"/><rect x="0" y="25" width="1" height="4" fill="#ff0"/><rect x="511" y="25" width="1" height="4" fill="#ff0"/><rect x="0" y="33" width="1" height="4" fill="#ff0"/><rect x="511" y="33" width="1" height="4" fill="#ff0"/><rect x="0" y="41" width="1" height="4" fill="#ff0"/><rect x="511" y="41" width="1" height="4" fill="#ff0"/><rect x="0" y="49" width="1" height="4" fill="#ff0"/><rect x="511" y="49" width="1" height="4" fill="#ff0"/><rect x="0" y="57" width="1" height="4" fill="#ff0"/><rect x="511" y="57" width="1" height="4" fill="#ff0"/><rect x="0" y="65" width="1" height="4" fill="#ff0"/><rect x="511" y="65" width="1" height="4" fill="#ff0"/><rect x="0" y="73" width="1" height="4" fill="#ff0"/><rect x="511" y="73" width="1" height="4" fill="#ff0"/><rect x="0" y="81" width="1" height="4" fill="#ff0"/><rect x="511" y="81" width="1" height="4" fill="#ff0"/><rect x="0" y="89" width="1" height="4" fill="#ff0"/><rect x="511" y="89" width="1" height="4" fill="#ff0"/><rect x="0" y="97" width="1" height="4" fill="#ff0"/><rect x="511" y="97" width="1" height="4" fill="#ff0"/><rect x="0" y="105" width="1" height="4" fill="#ff0"/><rect x="511" y="105" width="1" height="4" fill="#ff0"/><rect x="0" y="113" width="1" height="4" fill="#ff0"/><rect x="511" y="113" width="1" height="4" fill="#ff0"/><rect x="0" y="121" width="1" height="4" fill="#ff0"/><rect x="511" y="121" width="1" height="4" fill="#ff0"/><rect x="0" y="129" width="1" height="4" fill="#ff0"/><rect x="511" y="129" width="1" height="4" fill="#ff0"/><rect x="0" y="137" width="1" height="4" fill="#ff0"/><rect x="511" y="137" width="1" height="4" fill="#ff0"/><rect x="0" y="145" width="1" height="4" fill="#ff0"/><rect x="511" y="145" width="1" height="4" fill="#ff0"/><rect x="0" y="153" width="1" height="4" fill="#ff0"/><rect x="511" y="153" width="1" height="4" fill="#ff0"/><rect x="0" y="161" width="1" height="4" fill="#ff0"/><rect x="511" y="161" width="1" height="4" fill="#ff0"/><rect x="0" y="169" width="1" height="4" fill="#ff0"/><rect x="511" y="169" width="1" height="4" fill="#ff0"/><rect x="0" y="177" width="1" height="4" fill="#ff0"/><rect x="511" y="177" width="1" height="4" fill="#ff0"/><rect x="0" y="185" width="1" height="4" fill="#ff0"/><rect x="511" y="185" width="1" height="4" fill="#ff0"/><rect x="0" y="193" width="1" height="4" fill="#ff0"/><rect x="511" y="193" width="1" height="4" fill="#ff0"/><rect x="0" y="201" width="1" height="4" fill="#ff0"/><rect x="511" y="201" width="1" height="4" fill="#ff0"/><rect x="0" y="209" width="1" height="4" fill="#ff0"/><rect x="511" y="209" width="1" height="4" fill="#ff0"/><rect x="0" y="217" width="1" height="4" fill="#ff0"/><rect x="511" y="217" width="1" height="4" fill="#ff0"/><rect x="0" y="225" width="1" height="4" fill="#ff0"/><rect x="511" y="225" width="1" height="4" fill="#ff0"/><rect x="0" y="233" width="1" height="4" fill="#ff0"/><rect x="511" y="233" width="1" height="4" fill="#ff0"/><rect x="0" y="241" width="1" height="4" fill="#ff0"/><rect x="511" y="241" width="1" height="4" fill="#ff0"/><rect x="0" y="249" width="1" height="4" fill="#ff0"/><rect x="511" y="249" width="1" height="4" fill="#ff0"/><rect x="0" y="257" width="1" height="4" fill="#ff0"/><rect x="511" y="257" width="1" height="4" fill="#ff0"/><rect x="0" y="265" width="1" height="4" fill="#ff0"/><rect x="511" y="265" width="1" height="4" fill="#ff0"/><rect x="0" y="273" width="1" height="4" fill="#ff0"/><rect x="511" y="273" width="1" height="4" fill="#ff0"/><rect x="0" y="281" width="1" height="4" fill="#ff0"/><rect x="511" y="281" width="1" height="4" fill="#ff0"/><rect x="0" y="289" width="1" height="4" fill="#ff0"/><rect x="511" y="289" width="1" height="4" fill="#ff0"/><rect x="0" y="297" width="1" height="4" fill="#ff0"/><rect x="511" y="297" width="1" height="4" fill="#ff0"/><rect x="0" y="305" width="1" height="4" fill="#ff0"/><rect x="511" y="305" width="1" height="4" fill="#ff0"/><rect x="0" y="313" width="1" height="4" fill="#ff0"/><rect x="511" y="313" width="1" height="4" fill="#ff0"/><rect x="0" y="321" width="1" height="4" fill="#ff0"/><rect x="511" y="321" width="1" height="4" fill="#ff0"/><rect x="0" y="329" width="1" height="4" fill="#ff0"/><rect x="511" y="329" width="1" height="4" fill="#ff0"/><rect x="0" y="337" width="1" height="4" fill="#ff0"/><rect x="511" y="337" width="1" height="4" fill="#ff0"/><rect x="0" y="345" width="1" height="4" fill="#ff0"/><rect x="511" y="345" width="1" height="4" fill="#ff0"/><rect x="0" y="353" width="1" height="4" fill="#ff0"/><rect x="511" y="353" width="1" height="4" fill="#ff0"/><rect x="0" y="361" width="1" height="4" fill="#ff0"/><rect x="511" y="361" width="1" height="4" fill="#ff0"/><rect x="0" y="369" width="1" height="4" fill="#ff0"/><rect x="511" y="369" width="1" height="4" fill="#ff0"/><rect x="0" y="377" width="1" height="4" fill="#ff0"/><rect x="511" y="377" width="1" height="4" fill="#ff0"/><rect x="0" y="385" width="1" height="4" fill="#ff0"/><rect x="511" y="385" width="1" height="4" fill="#ff0"/><rect x="0" y="393" width="1" height="4" fill="#ff0"/><rect x="511" y="393" width="1" height="4" fill="#ff0"/><rect x="0" y="401" width="1" height="4" fill="#ff0"/><rect x="511" y="401" width="1" height="4" fill="#ff0"/><rect x="0" y="409" width="1" height="4" fill="#ff0"/><rect x="511" y="409" width="1" height="4" fill="#ff0"/><rect x="0" y="417" width="1" height="4" fill="#ff0"/><rect x="511" y="417" width="1" height="4" fill="#ff0"/><rect x="0" y="425" width="1" height="4" fill="#ff0"/><rect x="511" y="425" width="1" height="4" fill="#ff0"/><rect x="0" y="433" width="1" height="4" fill="#ff0"/><rect x="511" y="433" width="1" height="4" fill="#ff0"/><rect x="0" y="441" width="1" height="4" fill="#ff0"/><rect x="511" y="441" width="1" height="4" fill="#ff0"/><rect x="0" y="449" width="1" height="4" fill="#ff0"/><rect x="511" y="449" width="1" height="4" fill="#ff0"/><rect x="0" y="457" width="1" height="4" fill="#ff0"/><rect x="511" y="457" width="1" height="4" fill="#ff0"/><rect x="0" y="465" width="1" height="4" fill="#ff0"/><rect x="511" y="465" width="1" height="4" fill="#ff0"/><rect x="0" y="473" width="1" height="4" fill="#ff0"/><rect x="511" y="473" width="1" height="4" fill="#ff0"/><rect x="0" y="481" width="1" height="4" fill="#ff0"/><rect x="511" y="481" width="1" height="4" fill="#ff0"/><rect x="0" y="489" width="1" height="4" fill="#ff0"/><rect x="511" y="489" width="1" height="4" fill="#ff0"/><rect x="0" y="497" width="1" height="4" fill="#ff0"/><rect x="511" y="497" width="1" height="4" fill="#ff0"/><rect x="0" y="505" width="1" height="4" fill="#ff0"/><rect x="511" y="505" width="1" height="4" fill="#ff0"/><defs><radialGradient id="beam" cx="603.5" cy="446.5" r="80" gradientUnits="userSpaceOnUse"><stop offset="0" stop-color="#909090"/><stop offset="0.2" stop-color="#727272"/><stop offset="0.4" stop-color="#525252"/><stop offset="0.6" stop-color="#323232"/><stop offset="0.8" stop-color="#171717"/><stop offset="1" stop-color="#050505"/></radialGradient></defs><linearGradient id="beamfade" x1="603.5" y1="446.5" x2="660" y2="401.9" gradientUnits="userSpaceOnUse"><stop offset="0.55" stop-color="#000" stop-opacity="0"/><stop offset="1" stop-color="#000" stop-opacity="0.45"/></linearGradient><g transform="translate(-464,-205)" filter="url(#bl)"><path d="M603.5 446.5 L644 382 L674 420 Z" fill="url(#beam)"/><path d="M603.5 446.5 L644 382 L674 420 Z" fill="url(#beamfade)"/></g><filter id="bl"><feGaussianBlur stdDeviation="0.6"/></filter></svg>
<svg class="a" style="left:125px;top:332px;" width="14" height="20" viewBox="0 0 14 20"><path d="M1 1 L1 16 L4.6 12.6 L7.4 18.4 L9.8 17.3 L7.1 11.6 L12 11.6 Z" fill="#fff" stroke="#000" stroke-width="1" stroke-linejoin="round"/></svg>
<svg class="a" style="left:137px;top:347px;" width="17" height="16" viewBox="0 0 17 16"><path d="M15.5 1.5 L9 8 L7.5 6.5 L14 0.5 Z" fill="#f4f4f4" stroke="#8a8a8a" stroke-width="0.9"/><path d="M8.5 7.5 Q4 7.5 2.5 11 L1 14.5 Q6 14.5 9.5 10.5 Z" fill="#e6e6e6" stroke="#555" stroke-width="0.9"/></svg>
<div class="a" style="left:1422px;top:100px;width:18px;height:722px;background:#e1e1dc;"></div>
<div class="a" style="left:1424px;top:100px;width:13px;height:722px;border:1px solid #a3a39c;background:#e1e1dc;"></div>
<div class="a" style="left:1425px;top:101px;width:11px;height:12px;background:linear-gradient(#f6f6f4,#e4e4df);border-bottom:1px solid #b3b3ad;"></div>
<svg class="a" style="left:1426px;top:103px;" width="9" height="8" viewBox="0 0 9 8"><path d="M1 6 L4.5 2 L8 6 Z" fill="#111"/></svg>
<div class="a" style="left:1425px;top:114px;width:11px;height:695px;border:1px solid #fff;border-right-color:#c7c7c1;border-bottom-color:#c7c7c1;"></div>
<div class="a" style="left:1425px;top:809px;width:11px;height:12px;background:linear-gradient(#f6f6f4,#e4e4df);border-top:1px solid #b3b3ad;"></div>
<svg class="a" style="left:1426px;top:811px;" width="9" height="8" viewBox="0 0 9 8"><path d="M1 2 L4.5 6 L8 2 Z" fill="#111"/></svg>
<svg class="a" style="left:1424px;top:84px;" width="14" height="14" viewBox="0 0 14 14"><rect x="0.5" y="0.5" width="11" height="11" fill="none" stroke="#1a3f8a" stroke-width="1.3" stroke-dasharray="1.5 1.5"/><circle cx="5.5" cy="5.5" r="3" fill="#eee" stroke="#555" stroke-width="1.2"/><path d="M8 8 L11.5 11.5" stroke="#555" stroke-width="1.8"/></svg>
<div class="a" style="left:19px;top:825px;width:1403px;height:13px;border:1px solid #a3a39c;background:#e1e1dc;"></div>
<div class="a" style="left:20px;top:826px;width:12px;height:11px;background:#e1e1dc;border-right:1px solid #a3a39c;"></div>
<svg class="a" style="left:22px;top:827px;" width="9" height="9" viewBox="0 0 9 9"><path d="M6 1 L2.5 4.5 L6 8 Z" fill="#111"/></svg>
<div class="a" style="left:32px;top:826px;width:1376px;height:11px;border:1px solid #fff;border-right-color:#c7c7c1;border-bottom-color:#c7c7c1;"></div>
<svg class="a" style="left:715px;top:830px;shape-rendering:crispEdges" width="13" height="4" viewBox="0 0 13 4"><rect x="2" y="2" width="2" height="2" fill="#fff"/><rect x="6" y="2" width="2" height="2" fill="#fff"/><rect x="10" y="2" width="2" height="2" fill="#fff"/><rect x="1" y="1" width="2" height="2" fill="#8a8a84"/><rect x="5" y="1" width="2" height="2" fill="#8a8a84"/><rect x="9" y="1" width="2" height="2" fill="#8a8a84"/></svg>
<svg class="a" style="left:1429px;top:455px;shape-rendering:crispEdges" width="4" height="13" viewBox="0 0 4 13"><rect x="2" y="2" width="2" height="2" fill="#fff"/><rect x="2" y="6" width="2" height="2" fill="#fff"/><rect x="2" y="10" width="2" height="2" fill="#fff"/><rect x="1" y="1" width="2" height="2" fill="#8a8a84"/><rect x="1" y="5" width="2" height="2" fill="#8a8a84"/><rect x="1" y="9" width="2" height="2" fill="#8a8a84"/></svg>
<div class="a" style="left:1408px;top:826px;width:13px;height:11px;background:#e1e1dc;border-left:1px solid #a3a39c;"></div>
<svg class="a" style="left:1410px;top:827px;" width="9" height="9" viewBox="0 0 9 9"><path d="M3 1 L7 4.5 L3 8 Z" fill="#111"/></svg>
<svg class="a" style="left:4px;top:827px;" width="11" height="11" viewBox="0 0 11 11"><rect x="0.5" y="0.5" width="9" height="9" fill="none" stroke="#fff"/><rect x="0.5" y="0.5" width="9" height="9" fill="none" stroke="#8a8a84" stroke-width="1" stroke-dasharray="2 2"/></svg>
<svg class="a" style="left:1424px;top:824px;" width="16" height="17" viewBox="0 0 16 17"><path d="M8 1 L11 4.5 L9.3 4.5 L9.3 7.2 L12 7.2 L12 5.5 L15.5 8.5 L12 11.5 L12 9.8 L9.3 9.8 L9.3 12.5 L11 12.5 L8 16 L5 12.5 L6.7 12.5 L6.7 9.8 L4 9.8 L4 11.5 L0.5 8.5 L4 5.5 L4 7.2 L6.7 7.2 L6.7 4.5 L5 4.5 Z" fill="#1d4ea0"/></svg>
<div class="a" style="left:0px;top:838px;width:1440px;height:36px;background:#e1e1dc;"></div>
<div class="a" style="left:0px;top:841px;width:1422px;height:32px;border-top:1px solid #a3a39c;border-right:1px solid #fff;"></div>
<div class="t" style="left:3.30px;top:849.75px;font-size:13.3px;font-weight:400;color:#8d8d94;transform:scaleX(1.0836);-webkit-text-stroke:0.28px currentColor;text-shadow:1px 1px 0 #fff;">-1352.0, 512.0</div>
<div class="a" style="left:99px;top:843px;width:53px;height:28px;border:1px solid;border-color:#fff #a6a59e #a6a59e #fff;background:#e1e1dc;"></div>
<div class="t" style="left:105.80px;top:851.80px;font-size:11.5px;font-weight:400;color:#101010;transform:scaleX(0.9842);-webkit-text-stroke:0.24px currentColor;">px</div>
<div class="a" style="left:129px;top:847px;width:1px;height:20px;background:#aaa9a3;border-right:1px solid #fff;width:2px;"></div>
<svg class="a" style="left:136px;top:854px;" width="9" height="6" viewBox="0 0 9 6"><path d="M0.5 0.5 L8 0.5 L4.25 4.8 Z" fill="#111"/></svg>
<div class="a" style="left:152px;top:843px;width:72px;height:28px;border:1px solid;border-color:#fff #a6a59e #a6a59e #fff;background:#e1e1dc;"></div>
<div class="a" style="left:153px;top:844px;width:54px;height:26px;background:#fff;border-left:1px solid #a6a59e;border-top:1px solid #a6a59e;"></div>
<div class="t" style="left:177.20px;top:851.80px;font-size:11px;font-weight:400;color:#101010;transform:scaleX(1.0122);-webkit-text-stroke:0.23px currentColor;">25 %</div>
<svg class="a" style="left:210px;top:853.5px;" width="9" height="6" viewBox="0 0 9 6"><path d="M0.5 0.5 L8 0.5 L4.25 4.8 Z" fill="#111"/></svg>
<svg class="a" style="left:226px;top:849px;" width="17" height="16" viewBox="0 0 17 16"><path d="M14.5 2.5 L6.5 10.5" stroke="#666" stroke-width="3.6" stroke-linecap="round"/><path d="M14.5 2.5 L6.5 10.5" stroke="#e8e8e8" stroke-width="2.2" stroke-linecap="round"/><path d="M12.5 1.5 L16 5" stroke="#e0a060" stroke-width="2.6"/><path d="M7.5 9 Q3 9.5 2.5 12 L0.5 15 Q5 15 9 12 Z" fill="#111"/></svg>
<div class="t" style="left:244.30px;top:849.75px;font-size:13.3px;font-weight:400;color:#101010;transform:scaleX(1.1205);-webkit-text-stroke:0.28px currentColor;">Click to paint (Ctrl to pick a colour)</div>
<svg class="a" style="left:1422px;top:853px;" width="18" height="20" viewBox="0 0 18 20"><path d="M17 4 L3 18 M17 9 L8 18 M17 14 L13 18" stroke="#9a9a94" stroke-width="1"/><path d="M17 5 L4 18 M17 10 L9 18 M17 15 L14 18" stroke="#fff" stroke-width="1"/></svg>
<div class="a" style="left:0px;top:872px;width:1440px;height:28px;background:#e1e1dc;border-top:2px solid #fff;"></div>
<div class="a" style="left:0px;top:874px;width:1440px;height:1px;background:#cfcfca;"></div>
<svg class="a" style="left:2px;top:879px;" width="18" height="16" viewBox="0 0 18 16"><rect x="1.5" y="1.5" width="14" height="12" fill="#dfe8d8" stroke="#3a6aa8" stroke-width="1.5"/><rect x="0" y="0" width="4" height="4" fill="#3a6aa8"/><rect x="13" y="0" width="4" height="4" fill="#3a6aa8"/><rect x="0" y="11" width="4" height="4" fill="#3a6aa8"/><rect x="13" y="11" width="4" height="4" fill="#3a6aa8"/><path d="M6 10 L11 5" stroke="#e08a20" stroke-width="2"/></svg>
<div class="a" style="left:21px;top:875px;width:1px;height:25px;background:#b8b8b2;"></div>
<div class="a" style="left:26px;top:879px;width:3px;height:17px;background:repeating-linear-gradient(#999 0 1px,#fff 1px 2px,transparent 2px 4px);"></div>
<div class="a" style="left:32px;top:875px;width:201px;height:25px;background:#e1e1dc;border-top:2px solid #fff;border-left:2px solid #fff;border-right:1px solid #b5b5ae;border-bottom:1px solid #b5b5ae;"></div>
<svg class="a" style="left:40px;top:879px;" width="16" height="17" viewBox="0 0 16 17"><rect x="1.5" y="2.5" width="12" height="13" fill="#f6f6f2" stroke="#999" /><path d="M3 2 V4 M5 2 V4 M7 2 V4 M9 2 V4 M11 2 V4" stroke="#666" stroke-width="0.8"/><path d="M14.5 6 L7 14" stroke="#e59a30" stroke-width="2.2"/></svg>
<div class="t" style="left:63.30px;top:880.70px;font-size:13px;font-weight:400;color:#101010;transform:scaleX(1.1812);-webkit-text-stroke:0.27px currentColor;">[*Texture_tutorial (~/D...</div>
<div class="a" style="left:233px;top:875px;width:200px;height:25px;background:#c9c9c4;border-top:1px solid #a9a8a2;border-left:1px solid #a9a8a2;"></div>
<div class="a" style="left:240px;top:879px;width:16px;height:16px;background:#000;border:1px solid #333;"></div>
<div class="t" style="left:264.40px;top:881.00px;font-size:13px;font-weight:400;color:#3e5f92;transform:scaleX(1.1603);-webkit-text-stroke:0.27px currentColor;">*demo-master.xcf-1.0 ...</div>
<div class="a" style="left:433px;top:875px;width:202px;height:25px;background:#e1e1dc;border-top:2px solid #fff;border-left:2px solid #fff;border-right:1px solid #b5b5ae;border-bottom:1px solid #b5b5ae;"></div>
<svg class="a" style="left:441px;top:879px;" width="18" height="16" viewBox="0 0 18 16"><defs><linearGradient id="wg" x1="0" y1="0" x2="0" y2="1"><stop offset="0" stop-color="#8a867c"/><stop offset="1" stop-color="#4e4a42"/></linearGradient></defs><path d="M3.5 6 L4.5 1 L8.5 4.5 Q12 4 14.5 4.5 L17 0.5 L17.5 8 Q17 14 11 15 Q5 15 3.5 12 Q1 11 1.5 8 Z" fill="url(#wg)"/><circle cx="7.5" cy="8" r="2.8" fill="#fff"/><circle cx="12.3" cy="7.6" r="2.8" fill="#fff"/><circle cx="8.3" cy="8.4" r="1.1" fill="#000"/><circle cx="13" cy="8" r="1.1" fill="#000"/><circle cx="2.6" cy="9.5" r="1.7" fill="#f4f4f4" stroke="#222" stroke-width="0.8"/></svg>
<div class="t" style="left:464.41px;top:881.00px;font-size:13px;font-weight:400;color:#101010;transform:scaleX(1.0904);-webkit-text-stroke:0.27px currentColor;">Layers</div>
<div class="a" style="left:634px;top:875px;width:202px;height:25px;background:#e1e1dc;border-top:2px solid #fff;border-left:2px solid #fff;border-right:1px solid #b5b5ae;border-bottom:1px solid #b5b5ae;"></div>
<svg class="a" style="left:642px;top:879px;" width="18" height="16" viewBox="0 0 18 16"><defs><linearGradient id="wg" x1="0" y1="0" x2="0" y2="1"><stop offset="0" stop-color="#8a867c"/><stop offset="1" stop-color="#4e4a42"/></linearGradient></defs><path d="M3.5 6 L4.5 1 L8.5 4.5 Q12 4 14.5 4.5 L17 0.5 L17.5 8 Q17 14 11 15 Q5 15 3.5 12 Q1 11 1.5 8 Z" fill="url(#wg)"/><circle cx="7.5" cy="8" r="2.8" fill="#fff"/><circle cx="12.3" cy="7.6" r="2.8" fill="#fff"/><circle cx="8.3" cy="8.4" r="1.1" fill="#000"/><circle cx="13" cy="8" r="1.1" fill="#000"/><circle cx="2.6" cy="9.5" r="1.7" fill="#f4f4f4" stroke="#222" stroke-width="0.8"/></svg>
<div class="t" style="left:666.70px;top:881.00px;font-size:13px;font-weight:400;color:#101010;transform:scaleX(1.0954);-webkit-text-stroke:0.27px currentColor;">Tool Options</div>
<div class="a" style="left:835px;top:875px;width:203px;height:25px;background:#e1e1dc;border-top:2px solid #fff;border-left:2px solid #fff;border-right:1px solid #b5b5ae;border-bottom:1px solid #b5b5ae;"></div>
<svg class="a" style="left:843px;top:879px;" width="18" height="16" viewBox="0 0 18 16"><defs><linearGradient id="wg" x1="0" y1="0" x2="0" y2="1"><stop offset="0" stop-color="#8a867c"/><stop offset="1" stop-color="#4e4a42"/></linearGradient></defs><path d="M3.5 6 L4.5 1 L8.5 4.5 Q12 4 14.5 4.5 L17 0.5 L17.5 8 Q17 14 11 15 Q5 15 3.5 12 Q1 11 1.5 8 Z" fill="url(#wg)"/><circle cx="7.5" cy="8" r="2.8" fill="#fff"/><circle cx="12.3" cy="7.6" r="2.8" fill="#fff"/><circle cx="8.3" cy="8.4" r="1.1" fill="#000"/><circle cx="13" cy="8" r="1.1" fill="#000"/><circle cx="2.6" cy="9.5" r="1.7" fill="#f4f4f4" stroke="#222" stroke-width="0.8"/></svg>
<div class="t" style="left:866.60px;top:881.00px;font-size:13px;font-weight:400;color:#101010;transform:scaleX(1.1190);-webkit-text-stroke:0.27px currentColor;">Toolbox</div>
<div class="a" style="left:1227px;top:876px;width:185px;height:22px;background:#d6d6d1;border:1px solid #a9a8a2;border-right-color:#fff;border-bottom-color:#fff;"></div>
<div class="a" style="left:1229px;top:879px;width:28px;height:18px;background:#476879;border:1px solid #fff;"></div>
<svg class="a" style="left:1233px;top:879px;" width="20" height="17" viewBox="0 0 20 17"><ellipse cx="10" cy="8.5" rx="6" ry="7.5" fill="#d31a1a"/><ellipse cx="10" cy="8.5" rx="2.6" ry="5.7" fill="#fff"/></svg>
<div class="a" style="left:1259px;top:879px;width:30px;height:18px;background:#476879;border:1px solid #fff;"></div>
<svg class="a" style="left:1265px;top:879px;" width="18" height="17" viewBox="0 0 18 17"><circle cx="9" cy="8.5" r="7.5" fill="#3464b4"/><path d="M2 6 Q4 1 10 1 Q6 4 7 7 Q11 6 13 9 Q14 14 9 15.5 Q14 16 16 11 Q16 17 9 17 Q1 16 1.5 9 Z" fill="#e8701a"/></svg>
<div class="a" style="left:1290px;top:879px;width:30px;height:18px;background:#476879;border:1px solid #fff;"></div>
<svg class="a" style="left:1293px;top:879px;" width="24" height="17" viewBox="0 0 24 17"><path d="M3 1 L21 16 M21 1 L3 16" stroke="#1f3f7a" stroke-width="2"/><circle cx="12" cy="8.5" r="3.5" fill="#f3b71b"/></svg>
<div class="a" style="left:1320px;top:879px;width:30px;height:18px;background:#476879;border:1px solid #fff;"></div>
<div class="a" style="left:1322px;top:881px;width:6px;height:13px;border:1px solid #fff;"></div>
<div class="a" style="left:1327px;top:879px;width:16px;height:17px;background:#000;"></div>
<div class="a" style="left:1344px;top:881px;width:5px;height:13px;border:1px solid #fff;"></div>
<div class="a" style="left:1351px;top:879px;width:29px;height:18px;background:#a5a59c;"></div>
<div class="a" style="left:1382px;top:879px;width:29px;height:18px;background:#a5a59c;"></div>
<svg class="a" style="left:1416px;top:875px;" width="24" height="24" viewBox="0 0 24 24"><path d="M2 7 L9 7 L11 5 L21 5 L21 22 L2 22 Z" fill="#2f6cc0" stroke="#1c4c96"/><path d="M2 10 L21 10 L21 22 L2 22 Z" fill="#5a9ae0" stroke="#1c4c96"/><path d="M8 6 Q14 0 20 3" stroke="#fff" stroke-width="2" fill="none"/></svg>
<div class="a" style="left:161px;top:195px;width:221px;height:588px;background:#e1e1dc;border:1px solid #4a4a4a;border-radius:6px 6px 4px 4px;box-shadow:1px 2px 7px 1px rgba(0,0,0,0.28);"></div>
<div class="a" style="left:161px;top:195px;width:221px;height:27px;background:linear-gradient(#8a8a8a,#5c5c5c);border:1px solid #464646;border-bottom:none;border-radius:6px 6px 0 0;box-shadow:inset 0 1px 0 #9c9c9c;"></div>
<div class="a" style="left:168px;top:196px;width:25px;height:20px;border:1px solid #3e3e3e;border-top:none;border-radius:0 0 4px 4px;box-shadow:inset 1px 0 0 rgba(255,255,255,0.18),inset -1px 0 0 rgba(255,255,255,0.18),0 1px 0 rgba(255,255,255,0.18);"></div>
<svg class="a" style="left:173px;top:199px;" width="15" height="14" viewBox="0 0 15 14"><path d="M3 2.5 L12 11.5 M12 2.5 L3 11.5" stroke="#b0b0b0" stroke-width="1.5"/></svg>
<div class="t" style="left:258.50px;top:200.50px;font-size:14.5px;font-weight:700;color:#a8a8a8;transform:scaleX(1.0922);-webkit-text-stroke:0.12px currentColor;">Layers</div>
<div class="a" style="left:162px;top:222px;width:219px;height:2px;background:#fff;"></div>
<div class="a" style="left:162px;top:773px;width:219px;height:1px;background:#fff;"></div>
<div class="a" style="left:161px;top:778px;width:221px;height:5px;background:linear-gradient(#777,#5c5c5c);border-radius:0 0 5px 5px;"></div>
<div class="a" style="left:162px;top:223px;width:1px;height:555px;background:#fff;"></div>
<div class="a" style="left:163px;top:227px;width:217px;height:1px;background:#a9a79d;"></div>
<div class="t" style="left:164.60px;top:234.80px;font-size:11px;font-weight:700;color:#000;transform:scaleX(1.1428);-webkit-text-stroke:0.09px currentColor;">Layers</div>
<div class="a" style="left:363px;top:234px;width:12px;height:12px;border:1px solid #8d8d87;border-radius:2px;background:linear-gradient(#f4f4f1,#dedcd6);"></div>
<svg class="a" style="left:364px;top:235px;" width="10" height="10" viewBox="0 0 10 10"><path d="M7 2 L2.5 5 L7 8 Z" fill="#3a3a3a"/></svg>
<div class="t" style="left:164.60px;top:257.80px;font-size:11px;font-weight:400;color:#000;transform:scaleX(1.1043);-webkit-text-stroke:0.23px currentColor;">Mode:</div>
<div class="a" style="left:213px;top:250px;width:165px;height:26px;border:1px solid;border-color:#fff #a6a59e #a6a59e #fff;border-radius:1px;background:#e1e1dc;"></div>
<div class="t" style="left:219.60px;top:257.80px;font-size:11px;font-weight:400;color:#000;transform:scaleX(1.1370);-webkit-text-stroke:0.23px currentColor;">Normal</div>
<div class="a" style="left:356px;top:254px;width:1px;height:18px;background:#a9a9a2;"></div>
<svg class="a" style="left:362px;top:259px;" width="10" height="6" viewBox="0 0 10 6"><path d="M0.5 0.5 L9 0.5 L4.75 5 Z" fill="#111"/></svg>
<div class="t" style="left:164.60px;top:284.00px;font-size:11px;font-weight:400;color:#000;transform:scaleX(1.1318);-webkit-text-stroke:0.23px currentColor;">Opacity:</div>
<div class="a" style="left:215px;top:282px;width:104px;height:14px;background:#c2c2bd;border:1px solid #b0b0a9;border-top-color:#9b9b94;border-bottom-color:#fff;"></div>
<div class="a" style="left:288px;top:283px;width:31px;height:12px;background:linear-gradient(#efefec,#dfdfda);border:1px solid #b8b8b1;border-radius:1px;box-shadow:inset 1px 1px 0 #fff;"></div>
<svg class="a" style="left:298px;top:287px;shape-rendering:crispEdges" width="11" height="4" viewBox="0 0 11 4"><rect x="1" y="1" width="2" height="2" fill="#fff"/><rect x="5" y="1" width="2" height="2" fill="#fff"/><rect x="9" y="1" width="2" height="2" fill="#fff"/><rect x="0" y="0" width="2" height="2" fill="#8f8f88"/><rect x="4" y="0" width="2" height="2" fill="#8f8f88"/><rect x="8" y="0" width="2" height="2" fill="#8f8f88"/></svg>
<div class="a" style="left:324px;top:278px;width:55px;height:22px;background:#fff;border:1px solid #a6a59e;border-bottom-color:#fff;border-right:none;"></div>
<div class="t" style="left:328.80px;top:284.00px;font-size:11px;font-weight:400;color:#000;transform:scaleX(1.1201);-webkit-text-stroke:0.23px currentColor;">100.0</div>
<div class="a" style="left:367px;top:278px;width:12px;height:11px;background:linear-gradient(#f2f2ef,#e2e2dd);border:1px solid #b5b5ae;"></div>
<div class="a" style="left:367px;top:289px;width:12px;height:11px;background:linear-gradient(#f2f2ef,#e2e2dd);border:1px solid #b5b5ae;border-top:none;"></div>
<svg class="a" style="left:369px;top:281px;" width="8" height="5" viewBox="0 0 8 5"><path d="M0.5 4.5 L4 0.5 L7.5 4.5 Z" fill="#c0c0ba"/></svg>
<svg class="a" style="left:369px;top:292px;" width="8" height="5" viewBox="0 0 8 5"><path d="M0.5 0.5 L4 4.5 L7.5 0.5 Z" fill="#111"/></svg>
<div class="t" style="left:164.60px;top:305.90px;font-size:11px;font-weight:400;color:#000;transform:scaleX(1.0444);-webkit-text-stroke:0.23px currentColor;">Lock:</div>
<div class="a" style="left:215px;top:305px;width:12px;height:12px;background:#fff;border:1px solid #4a4a4a;border-right-color:#d8d8d4;border-bottom-color:#d8d8d4;"></div>
<svg class="a" style="left:232px;top:303px;" width="16" height="16" viewBox="0 0 16 16"><rect width="16" height="16" fill="#999"/><rect x="0" y="0" width="4" height="4" fill="#666"/><rect x="8" y="0" width="4" height="4" fill="#666"/><rect x="4" y="4" width="4" height="4" fill="#666"/><rect x="12" y="4" width="4" height="4" fill="#666"/><rect x="0" y="8" width="4" height="4" fill="#666"/><rect x="8" y="8" width="4" height="4" fill="#666"/><rect x="4" y="12" width="4" height="4" fill="#666"/><rect x="12" y="12" width="4" height="4" fill="#666"/></svg>
<div class="a" style="left:164px;top:322px;width:215px;height:405px;background:#fff;border:1px solid #a9a79d;border-right-color:#fff;border-bottom-color:#fff;"></div>
<div class="a" style="left:378px;top:322px;width:3px;height:405px;background:linear-gradient(90deg,#d4d4ce,#b9b9b2);"></div>
<svg width="0" height="0" style="position:absolute"><defs><pattern id="ck" width="8" height="8" patternUnits="userSpaceOnUse"><rect width="8" height="8" fill="#999"/><rect x="4" width="4" height="4" fill="#666"/><rect y="4" width="4" height="4" fill="#666"/></pattern></defs></svg>
<svg class="a" style="left:172px;top:339px;" width="19" height="10" viewBox="0 0 19 10"><path d="M1.5 5 Q4 1.5 6.5 1.2 L12.5 1.2 Q15 1.5 17.5 5 Q15 8.5 12.5 8.8 L6.5 8.8 Q4 8.5 1.5 5 Z" fill="#fff" stroke="#7a7a7a" stroke-width="1.4"/><circle cx="9.7" cy="5" r="3.1" fill="#2f5fb0"/><circle cx="10.4" cy="5.6" r="1.3" fill="#000"/><rect x="7.6" y="2.8" width="1.8" height="1.8" fill="#fff"/></svg>
<div class="a" style="left:232px;top:326px;width:36px;height:36px;background:#000;border-radius:2px;"></div>
<svg class="a" style="left:234px;top:328px;" width="32" height="32" viewBox="0 0 32 32"><rect width="32" height="32" fill="url(#ck)"/><path d="M8 14 L11.5 11 L14.5 14 L11 17 Z" fill="#111"/><path d="M13 8 Q20 7 24 12" stroke="#aaa" stroke-width="0.8" fill="none" opacity="0.7"/></svg>
<div class="a" style="left:270px;top:324px;width:107px;height:40px;overflow:hidden;">
<div class="t" style="left:2.60px;top:15.00px;font-size:11px;font-weight:400;color:#000;transform:scaleX(1.1500);-webkit-text-stroke:0.23px currentColor;">2x3_lightbeam.png</div>
</div>
<div class="a" style="left:232px;top:366px;width:36px;height:36px;background:#000;border-radius:2px;"></div>
<svg class="a" style="left:234px;top:368px;" width="32" height="32" viewBox="0 0 32 32"><rect width="32" height="32" fill="url(#ck)"/></svg>
<div class="t" style="left:272.60px;top:379.00px;font-size:11px;font-weight:400;color:#000;transform:scaleX(1.1344);-webkit-text-stroke:0.23px currentColor;">portholes</div>
<div class="a" style="left:232px;top:406px;width:36px;height:36px;background:#000;border-radius:2px;"></div>
<svg class="a" style="left:234px;top:408px;" width="32" height="32" viewBox="0 0 32 32"><rect width="32" height="32" fill="url(#ck)"/></svg>
<div class="t" style="left:272.60px;top:419.00px;font-size:11px;font-weight:400;color:#000;transform:scaleX(1.1112);-webkit-text-stroke:0.23px currentColor;">glow</div>
<div class="a" style="left:232px;top:446px;width:36px;height:36px;background:#000;border-radius:2px;"></div>
<svg class="a" style="left:234px;top:448px;" width="32" height="32" viewBox="0 0 32 32"><rect width="32" height="32" fill="url(#ck)"/></svg>
<div class="t" style="left:272.60px;top:459.00px;font-size:11px;font-weight:400;color:#000;transform:scaleX(1.1718);-webkit-text-stroke:0.23px currentColor;">louvres.png</div>
<div class="a" style="left:232px;top:486px;width:36px;height:36px;background:#000;border-radius:2px;"></div>
<svg class="a" style="left:234px;top:488px;" width="32" height="32" viewBox="0 0 32 32"><rect width="32" height="32" fill="url(#ck)"/></svg>
<div class="t" style="left:272.60px;top:499.00px;font-size:11px;font-weight:400;color:#000;transform:scaleX(1.1400);-webkit-text-stroke:0.23px currentColor;">cockpit.png</div>
<div class="a" style="left:232px;top:526px;width:36px;height:36px;background:#000;border-radius:2px;"></div>
<svg class="a" style="left:234px;top:528px;" width="32" height="32" viewBox="0 0 32 32"><rect width="32" height="32" fill="url(#ck)"/></svg>
<div class="t" style="left:272.60px;top:539.00px;font-size:11px;font-weight:400;color:#000;transform:scaleX(1.1324);-webkit-text-stroke:0.23px currentColor;">access-hatch.png</div>
<div class="a" style="left:232px;top:566px;width:36px;height:36px;background:#000;border-radius:2px;"></div>
<svg class="a" style="left:234px;top:568px;" width="32" height="32" viewBox="0 0 32 32"><rect x="1" y="0" width="30" height="1" fill="#5a5a5a"/><path d="M8 1 L23.1 8.4 L8 15.6 Z" fill="#b8b888"/><path d="M1 3.5 L4 1.2 L8 1 L8 15.6 L4 15.4 L1 13.2 L1 9.4 L5 9.4 L5 8 L1 8 Z" fill="#84b48c"/><path d="M0.9 24.4 L16 16.9 L16 32 Z" fill="#b8b888"/><path d="M16 16.9 L20 18 L23.1 20 L23.1 29 L20 30.8 L16 32 Z" fill="#84b48c"/><path d="M27.6 18.7 L30.6 24.4 L27.6 30.1 L24.6 24.4 Z" fill="#84b48c"/></svg>
<div class="t" style="left:272.60px;top:579.00px;font-size:11px;font-weight:400;color:#000;transform:scaleX(1.1350);-webkit-text-stroke:0.23px currentColor;">Background</div>
<div class="a" style="left:166px;top:604px;width:211px;height:40px;background:#476879;"></div>
<svg class="a" style="left:172px;top:619px;" width="19" height="10" viewBox="0 0 19 10"><path d="M1.5 5 Q4 1.5 6.5 1.2 L12.5 1.2 Q15 1.5 17.5 5 Q15 8.5 12.5 8.8 L6.5 8.8 Q4 8.5 1.5 5 Z" fill="#fff" stroke="#7a7a7a" stroke-width="1.4"/><circle cx="9.7" cy="5" r="3.1" fill="#2f5fb0"/><circle cx="10.4" cy="5.6" r="1.3" fill="#000"/><rect x="7.6" y="2.8" width="1.8" height="1.8" fill="#fff"/></svg>
<div class="a" style="left:232px;top:606px;width:36px;height:36px;background:#fff;border-radius:2px;"></div>
<div class="a" style="left:234px;top:608px;width:32px;height:32px;background:#000;"></div>
<div class="t" style="left:272.60px;top:619.00px;font-size:11px;font-weight:400;color:#000;transform:scaleX(1.1141);-webkit-text-stroke:0.23px currentColor;">bg</div>
<div class="a" style="left:164px;top:730px;width:215px;height:13px;border:1px solid #a6a59e;background:#e1e1dc;"></div>
<div class="a" style="left:165px;top:731px;width:12px;height:11px;background:linear-gradient(#f6f6f4,#e4e4df);border-right:1px solid #b3b3ad;"></div>
<svg class="a" style="left:167px;top:732px;" width="9" height="9" viewBox="0 0 9 9"><path d="M6 1 L2 4.5 L6 8 Z" fill="#bdbdb7"/></svg>
<div class="a" style="left:177px;top:731px;width:182px;height:11px;border:1px solid #fff;border-right-color:#c7c7c1;border-bottom-color:#c7c7c1;background:#e1e1dc;"></div>
<svg class="a" style="left:263px;top:734px;shape-rendering:crispEdges" width="11" height="4" viewBox="0 0 11 4"><rect x="1" y="1" width="2" height="2" fill="#fff"/><rect x="5" y="1" width="2" height="2" fill="#fff"/><rect x="9" y="1" width="2" height="2" fill="#fff"/><rect x="0" y="0" width="2" height="2" fill="#8f8f88"/><rect x="4" y="0" width="2" height="2" fill="#8f8f88"/><rect x="8" y="0" width="2" height="2" fill="#8f8f88"/></svg>
<div class="a" style="left:359px;top:731px;width:7px;height:11px;background:#c9c9c3;"></div>
<div class="a" style="left:366px;top:731px;width:12px;height:11px;background:linear-gradient(#f6f6f4,#e4e4df);border-left:1px solid #b3b3ad;"></div>
<svg class="a" style="left:368px;top:732px;" width="9" height="9" viewBox="0 0 9 9"><path d="M3 1 L7 4.5 L3 8 Z" fill="#111"/></svg>
<svg class="a" style="left:173px;top:749px;" width="17" height="17" viewBox="0 0 17 17"><rect x="2.5" y="3.5" width="12" height="13" rx="1" fill="#ecece8" stroke="#8d8d87"/><circle cx="11.5" cy="5.5" r="4.5" fill="#f5e21a" opacity="0.9"/><path d="M11.5 2.5 L12.4 4.6 L14.5 4.8 L12.9 6.2 L13.4 8.3 L11.5 7.2 L9.6 8.3 L10.1 6.2 L8.5 4.8 L10.6 4.6 Z" fill="#fffbe0"/></svg>
<svg class="a" style="left:208px;top:749px;" width="17" height="16" viewBox="0 0 17 16"><path d="M8.5 1 L15.5 8 L11.5 8 L11.5 15 L5.5 15 L5.5 8 L1.5 8 Z" fill="#3d77c4" stroke="#1e4f96" stroke-width="1"/></svg>
<svg class="a" style="left:244px;top:749px;" width="17" height="16" viewBox="0 0 17 16"><path d="M8.5 15 L15.5 8 L11.5 8 L11.5 1 L5.5 1 L5.5 8 L1.5 8 Z" fill="#3d5f9a" stroke="#2a4a80" stroke-width="1" stroke-dasharray="1 1"/></svg>
<svg class="a" style="left:281px;top:750px;" width="17" height="16" viewBox="0 0 17 16"><rect x="4.5" y="5.5" width="11" height="10" fill="#e8e8e4" stroke="#666"/><rect x="6" y="8" width="8" height="6" fill="#2f5490"/><rect x="1.5" y="1.5" width="11" height="10" fill="#e8e8e4" stroke="#666"/><rect x="3" y="3" width="8" height="7" fill="#2f5490"/><path d="M3 8 L6 6 L11 8 L11 10 L3 10Z" fill="#bbb"/></svg>
<svg class="a" style="left:316px;top:749px;" width="17" height="17" viewBox="0 0 17 17"><circle cx="8.5" cy="3" r="2" fill="none" stroke="#555" stroke-width="1.5"/><path d="M8.5 5 V15 M2 9 Q3 15 8.5 15 Q14 15 15 9" stroke="#555" stroke-width="2" fill="none" stroke-dasharray="1.2 0.8"/></svg>
<svg class="a" style="left:352px;top:749px;" width="17" height="19" viewBox="0 0 17 19"><defs><linearGradient id="tr" x1="0" y1="0" x2="1" y2="0"><stop offset="0" stop-color="#555"/><stop offset="0.45" stop-color="#d8d8d4"/><stop offset="1" stop-color="#444"/></linearGradient></defs><path d="M2 6 L3.5 16.5 Q8.5 18.5 13.5 16.5 L15 6 Z" fill="url(#tr)" stroke="#333" stroke-width="0.9"/><ellipse cx="8.5" cy="5" rx="7" ry="3.2" fill="#8a8a86" stroke="#333" stroke-width="0.9"/><ellipse cx="8.5" cy="4.5" rx="3.5" ry="1.4" fill="#444"/><path d="M5.5 9 V15.5 M8.5 9.5 V16.5 M11.5 9 V15.5" stroke="#666" stroke-width="0.8"/></svg>
<div class="a" style="left:1127px;top:37px;width:225px;height:332px;background:#e1e1dc;border:1px solid #4a4a4a;border-radius:6px 6px 4px 4px;box-shadow:1px 2px 7px 1px rgba(0,0,0,0.28);"></div>
<div class="a" style="left:1127px;top:37px;width:225px;height:26px;background:linear-gradient(#676767,#5a5a5a 50%,#555);border:1px solid #444;border-bottom:none;border-radius:6px 6px 0 0;box-shadow:inset 0 1px 0 #7c7c7c;"></div>
<div class="a" style="left:1134px;top:38px;width:25px;height:20px;border:1px solid #3a3a3a;border-top:none;border-radius:0 0 4px 4px;box-shadow:inset 1px 0 0 rgba(255,255,255,0.15),inset -1px 0 0 rgba(255,255,255,0.15),0 1px 0 rgba(255,255,255,0.15);"></div>
<svg class="a" style="left:1139px;top:41px;" width="15" height="14" viewBox="0 0 15 14"><path d="M3 2.5 L12 11.5 M12 2.5 L3 11.5" stroke="#a8a8a8" stroke-width="1.5"/></svg>
<div class="t" style="left:1223.30px;top:41.30px;font-size:14.5px;font-weight:700;color:#a0a0a0;transform:scaleX(1.0500);-webkit-text-stroke:0.12px currentColor;">Toolbox</div>
<svg class="a" style="left:1127px;top:63px;" width="225" height="26" viewBox="0 0 225 26"><path d="M11 26 C11 10 22 1.7 32 1.7 C44 1.7 54 10 62 19 L62 0 L212 0 L207.5 26 Z" fill="#cbcbc6"/><circle cx="27.2" cy="17.2" r="9.3" fill="#e1e1dc"/><circle cx="79" cy="12.5" r="17.5" fill="#e1e1dc"/><circle cx="84.8" cy="14.4" r="7.5" fill="#cbcbc6"/><circle cx="124.8" cy="12" r="26" fill="#e1e1dc"/><circle cx="130.6" cy="15.7" r="12.4" fill="#cbcbc6"/></svg>
<div class="a" style="left:1127px;top:62px;width:225px;height:1px;background:#555;"></div>
<div class="a" style="left:1191px;top:187px;width:32px;height:32px;background:repeating-conic-gradient(#f4f4f2 0 25%,#e8e8e5 0 50%) 0 0/2px 2px;border:2px solid #3a3a3a;border-right-color:#fff;border-bottom-color:#fff;"></div>
<svg class="a" style="left:1132px;top:96px;" width="22" height="22" viewBox="0 0 22 22"><defs><linearGradient id="g1" x1="0" y1="0" x2="1" y2="1"><stop offset="0" stop-color="#e6e6e3"/><stop offset="1" stop-color="#bdbdb8"/></linearGradient></defs><rect x="2.5" y="5.5" width="16" height="12" fill="url(#g1)" stroke="#000" stroke-width="1.4" stroke-dasharray="1.4 1.4"/></svg>
<svg class="a" style="left:1164px;top:96px;" width="22" height="22" viewBox="0 0 22 22"><ellipse cx="11" cy="11" rx="9" ry="7" fill="url(#g1)" stroke="#000" stroke-width="1.4" stroke-dasharray="1.4 1.4"/></svg>
<svg class="a" style="left:1196px;top:96px;" width="22" height="22" viewBox="0 0 22 22"><ellipse cx="12" cy="8" rx="7.5" ry="4" fill="none" stroke="#7a7a78" stroke-width="2"/><ellipse cx="12" cy="8" rx="7.5" ry="4" fill="none" stroke="#e8e8e8" stroke-width="0.8"/><path d="M6 11 Q3 14 6 17 Q8 15 6 13" stroke="#7a7a78" stroke-width="1.6" fill="none"/></svg>
<svg class="a" style="left:1228px;top:96px;" width="22" height="22" viewBox="0 0 22 22"><path d="M8 7 L18 17" stroke="#4d5a4a" stroke-width="3"/><path d="M8 7 L18 17" stroke="#a8b0a0" stroke-width="1"/><circle cx="6" cy="5" r="4" fill="#fffbb0" opacity="0.7"/><circle cx="6" cy="5" r="2" fill="#fff"/></svg>
<svg class="a" style="left:1260px;top:96px;" width="22" height="22" viewBox="0 0 22 22"><rect x="13" y="1" width="6" height="6" fill="#3a7ac8" stroke="#1e4f96"/><rect x="13" y="7" width="6" height="6" fill="#d61515" stroke="#8a0a0a"/><rect x="13" y="13" width="6" height="6" fill="#5ec732" stroke="#2a7a10"/><path d="M3 6 L9 5 L14 10 L11 12 L5 9 L3 9 Z" fill="#f0901c" stroke="#b05a08" stroke-width="0.8"/><rect x="0.5" y="5" width="3" height="5" fill="#fff" stroke="#777" stroke-width="0.8"/></svg>
<svg class="a" style="left:1292px;top:96px;" width="22" height="22" viewBox="0 0 22 22"><path d="M5 2 L12 13 M15 2 L9 13" stroke="#888" stroke-width="2.2"/><path d="M5 2 L12 13 M15 2 L9 13" stroke="#f2f2f2" stroke-width="0.9"/><circle cx="6" cy="16.5" r="3" fill="none" stroke="#2a55a0" stroke-width="2"/><circle cx="15" cy="16.5" r="3" fill="none" stroke="#2a55a0" stroke-width="2"/><path d="M11 8 Q11 2 14 2 L21 2" stroke="#e0901a" stroke-width="1" stroke-dasharray="1.5 1" fill="none"/></svg>
<svg class="a" style="left:1324px;top:96px;" width="22" height="22" viewBox="0 0 22 22"><rect x="14" y="9" width="7" height="11" rx="3" fill="#fff" stroke="#aaa" stroke-width="0.8"/><rect x="2" y="10" width="12" height="8" fill="#3566b0" stroke="#6a3a8a" stroke-width="1" stroke-dasharray="1 0.8"/><circle cx="8" cy="6" r="4" fill="#f0a040" stroke="#d07010" stroke-width="1" stroke-dasharray="1 0.6"/></svg>
<svg class="a" style="left:1132px;top:128px;" width="22" height="22" viewBox="0 0 22 22"><path d="M3 2 L3 20" stroke="#fff" stroke-width="3"/><path d="M3 2 L3 20" stroke="#666" stroke-width="0.8" stroke-dasharray="2 1"/><path d="M3 4 Q10 2 14 8" stroke="#aaa" stroke-width="1.4" fill="none"/><path d="M11 13 L14 8 L17 13 L15.5 15 L12.5 15 Z" fill="#f0d020" stroke="#a08000" stroke-width="0.8"/><rect x="12" y="15" width="5" height="6" fill="#2f5fa8"/></svg>
<svg class="a" style="left:1164px;top:128px;" width="22" height="22" viewBox="0 0 22 22"><path d="M4 17 L14 6" stroke="#2f5fa8" stroke-width="3"/><path d="M5 16 L13 7" stroke="#9ec0f0" stroke-width="1"/><path d="M13 4 L17 1.5 L20 5 L17.5 9 Z" fill="#111"/><circle cx="4" cy="18" r="2.2" fill="#2f5fa8"/></svg>
<svg class="a" style="left:1196px;top:128px;" width="22" height="22" viewBox="0 0 22 22"><path d="M13 13 L19 19" stroke="#555" stroke-width="3.2"/><circle cx="9" cy="9" r="7" fill="#a8c4e8" stroke="#888" stroke-width="1.8"/><path d="M3 9 Q9 12 15 9 L15 10 Q9 16 3 10Z" fill="#90b0e0"/></svg>
<svg class="a" style="left:1228px;top:128px;" width="22" height="22" viewBox="0 0 22 22"><circle cx="11" cy="5" r="2.2" fill="none" stroke="#444" stroke-width="1.3"/><path d="M10 1 L12 1 L12 3 L10 3Z" fill="#3a6ab8"/><path d="M9 6 L4 19 M13 6 L18 19" stroke="#3a6ab8" stroke-width="2.2"/><path d="M5 11 Q11 15 17 11" stroke="#3a6ab8" stroke-width="2" fill="none"/><rect x="9" y="12" width="4" height="4" fill="#ddd" stroke="#444" stroke-width="0.8"/><path d="M2 14 H20" stroke="#333" stroke-width="0.6"/></svg>
<svg class="a" style="left:1260px;top:128px;" width="22" height="22" viewBox="0 0 22 22"><path d="M11 1 L15 5 L12.5 5 L12.5 9.5 L17 9.5 L17 7 L21 11 L17 15 L17 12.5 L12.5 12.5 L12.5 17 L15 17 L11 21 L7 17 L9.5 17 L9.5 12.5 L5 12.5 L5 15 L1 11 L5 7 L5 9.5 L9.5 9.5 L9.5 5 L7 5 Z" fill="#3a78c8" stroke="#1e4f96" stroke-width="0.9"/></svg>
<svg class="a" style="left:1292px;top:128px;" width="22" height="22" viewBox="0 0 22 22"><rect x="6.5" y="6.5" width="9" height="9" rx="1" fill="#e8e8e6" stroke="#aaa"/><path d="M11 1 L11 5 M9.5 2.5 L11 1 L12.5 2.5 M11 21 L11 17 M9.5 19.5 L11 21 L12.5 19.5 M1 11 L5 11 M2.5 9.5 L1 11 L2.5 12.5 M21 11 L17 11 M19.5 9.5 L21 11 L19.5 12.5" stroke="#000" stroke-width="1.2" fill="none"/></svg>
<svg class="a" style="left:1324px;top:128px;" width="22" height="22" viewBox="0 0 22 22"><path d="M2 20 L10 11 L13 14 Z" fill="#ddd" stroke="#888" stroke-width="1"/><path d="M10 11 L19 3 L21 5 L13 14 Z" fill="#f0f0f0" stroke="#888" stroke-width="1"/><path d="M14 7 L17 10" stroke="#999"/></svg>
<svg class="a" style="left:1132px;top:160px;" width="22" height="22" viewBox="0 0 22 22"><rect x="4" y="2" width="9" height="7" fill="#3a6ab8" stroke="#1e4f96"/><path d="M6 13 L12 7 L18 13 L12 19 Z" fill="#3a6ab8" stroke="#1e4f96"/><path d="M15 3 Q19 3 19 7 M3 14 Q3 18 6 18" stroke="#3a6ab8" stroke-width="2" fill="none"/><path d="M15 3 Q19 3 19 7 M3 14 Q3 18 6 18" stroke="#fff" stroke-width="0.8" fill="none"/></svg>
<svg class="a" style="left:1164px;top:160px;" width="22" height="22" viewBox="0 0 22 22"><rect x="5" y="6" width="15" height="14" fill="#3a6ab8" stroke="#1e4f96"/><rect x="1.5" y="1.5" width="6" height="6" fill="#9ab8e0" stroke="#1e4f96"/><path d="M4 4 L16 16 M16 16 L12 16 M16 16 L16 12" stroke="#fff" stroke-width="1.4"/><path d="M9 2 H18 V10" stroke="#888" stroke-dasharray="1 1" fill="none"/></svg>
<svg class="a" style="left:1196px;top:160px;" width="22" height="22" viewBox="0 0 22 22"><path d="M6 3 L15 3 L20 16 L9 16 Z" fill="#5588cc" stroke="#1e4f96"/><path d="M2 17 L8 17 M5 14 L8 17 L5 20" stroke="#3a6ab8" stroke-width="2.4" fill="none"/><path d="M2 17 L8 17 M5 14 L8 17 L5 20" stroke="#fff" stroke-width="1" fill="none"/></svg>
<svg class="a" style="left:1228px;top:160px;" width="22" height="22" viewBox="0 0 22 22"><path d="M6 2 L16 2 L20 16 L2 16 Z" fill="#5588cc" stroke="#1e4f96"/><rect x="2" y="16" width="5" height="5" fill="#3a6ab8"/><rect x="15" y="16" width="5" height="5" fill="#3a6ab8"/><path d="M3 20 L6 17 M19 20 L16 17" stroke="#fff" stroke-width="1"/></svg>
<svg class="a" style="left:1260px;top:160px;" width="22" height="22" viewBox="0 0 22 22"><rect x="1" y="4" width="10" height="15" fill="#3a6ab8" stroke="#1e4f96"/><path d="M11 4 L20 1 L20 20 L11 17 Z" fill="#6a98d8" stroke="#1e4f96"/><path d="M3 11 L18 11 M6 8 L3 11 L6 14 M15 8 L18 11 L15 14" stroke="#e8f0ff" stroke-width="1.8" fill="none"/></svg>
<svg class="a" style="left:1292px;top:160px;" width="22" height="22" viewBox="0 0 22 22"><path d="M1.5 20 L8 2 L14 2 L20.5 20 L15.5 20 L14 15.5 L8 15.5 L6.5 20 Z M9.2 12 L12.8 12 L11 6 Z" fill="#151515" fill-rule="evenodd"/></svg>
<svg class="a" style="left:1324px;top:160px;" width="22" height="22" viewBox="0 0 22 22"><path d="M6 7 L17 3 L21 13 L12 20 L6 14 Z" fill="#e8e8e6" stroke="#777" stroke-width="1"/><circle cx="14" cy="11" r="1.8" fill="#888"/><path d="M14 11 L14 3 Q14 0 17 1" stroke="#777" fill="none"/><path d="M2 10 L2 16 L4 16 L4 11 L7 10" stroke="#3a6ab8" stroke-width="1.6" fill="none"/></svg>
<svg class="a" style="left:1132px;top:192px;" width="22" height="22" viewBox="0 0 22 22"><defs><linearGradient id="g2" x1="0" y1="0" x2="1" y2="0"><stop offset="0" stop-color="#333"/><stop offset="1" stop-color="#fff"/></linearGradient></defs><rect x="2.5" y="2.5" width="17" height="17" fill="url(#g2)" stroke="#444" stroke-width="1.5"/></svg>
<svg class="a" style="left:1164px;top:192px;" width="22" height="22" viewBox="0 0 22 22"><path d="M4 19 L6 14 L17 3 L20 6 L9 17 Z" fill="#d9a040" stroke="#8a5a10" stroke-width="0.9"/><path d="M17 3 L20 6 L21 5 Q21 3 19 2 Z" fill="#f07080"/><path d="M4 19 L5 16 L7 18 Z" fill="#333"/></svg>
<svg class="a" style="left:1196px;top:192px;" width="22" height="22" viewBox="0 0 22 22"><path d="M19 2 L11 12" stroke="#b8722a" stroke-width="3.4" stroke-linecap="round"/><path d="M10 11 L13 14" stroke="#999" stroke-width="3"/><path d="M9 12 Q5 12 4 16 L2 19 Q8 20 11 15 Z" fill="#111"/></svg>
<svg class="a" style="left:1228px;top:192px;" width="22" height="22" viewBox="0 0 22 22"><path d="M2 13 L6 7 L20 7 L20 13 L16 18 L2 18 Z" fill="#f09aa0" stroke="#e02a2a" stroke-width="1.2"/><path d="M2 13 L16 13 L20 7" stroke="#e02a2a" fill="none" stroke-width="0.8"/></svg>
<svg class="a" style="left:1260px;top:192px;" width="22" height="22" viewBox="0 0 22 22"><path d="M7 13 L18 2 L20 4 L9 15 Z" fill="#333" stroke="#111" stroke-width="0.8"/><path d="M9 14 L5 18" stroke="#888" stroke-width="1.5"/><path d="M3 20 L5 18" stroke="#5a8ad0" stroke-width="2" stroke-dasharray="1 1"/><path d="M12 12 Q15 15 20 14 Q17 17 14 15" stroke="#aaa" fill="none"/></svg>
<svg class="a" style="left:1292px;top:192px;" width="22" height="22" viewBox="0 0 22 22"><rect x="3" y="7" width="11" height="11" rx="2" fill="#3a6ab8" stroke="#1a3a70"/><rect x="5" y="3" width="7" height="5" rx="1.5" fill="#333"/><rect x="4" y="11" width="9" height="3" fill="#7aa0e0"/><path d="M15 18 L17 15 L19 17 L21 13 M14 20 L16 20" stroke="#3a6ab8" stroke-width="1.5" fill="none"/></svg>
<svg class="a" style="left:1324px;top:192px;" width="22" height="22" viewBox="0 0 22 22"><circle cx="11" cy="5" r="3" fill="#f4e8c8" stroke="#b07a20" stroke-width="1"/><rect x="9.5" y="8" width="3" height="4" fill="#f4e8c8" stroke="#b07a20" stroke-width="0.8"/><rect x="3" y="12" width="16" height="7" rx="1.5" fill="#f4e8c8" stroke="#b07a20" stroke-width="1.2"/><path d="M8 15.5 L14 15.5" stroke="#333" stroke-width="1.2"/></svg>
<svg class="a" style="left:1132px;top:224px;" width="22" height="22" viewBox="0 0 22 22"><path d="M3 7 L7 3 L19 15 L15 19 Z" fill="#e8d22a" stroke="#b09a10" stroke-width="1" stroke-linejoin="round"/><path d="M15 3 L19 7 L7 19 L3 15 Z" fill="#e8d22a" stroke="#b09a10" stroke-width="1" stroke-linejoin="round"/><rect x="8.5" y="8.5" width="5" height="5" fill="#f4e070" transform="rotate(45 11 11)"/></svg>
<svg class="a" style="left:1164px;top:224px;" width="22" height="22" viewBox="0 0 22 22"><path d="M6 10 L18 8 L21 20 L4 18 Z" fill="#3a6ab8" stroke="#1a3a70"/><circle cx="9" cy="4" r="2.8" fill="#f4e8c8" stroke="#b07a20"/><rect x="3" y="8" width="12" height="6" rx="1" fill="#f4e8c8" stroke="#b07a20" stroke-width="1.2"/><path d="M6 11 L12 11" stroke="#333"/></svg>
<svg class="a" style="left:1196px;top:224px;" width="22" height="22" viewBox="0 0 22 22"><path d="M11 2 Q13 8 17 12 Q19 18 11 19 Q3 18 5 12 Q9 8 11 2 Z" fill="#8ab0e0" stroke="#3a6ab8" stroke-width="1"/><path d="M7 13 Q8 17 11 17" stroke="#fff" stroke-width="1" fill="none"/></svg>
<svg class="a" style="left:1228px;top:224px;" width="22" height="22" viewBox="0 0 22 22"><path d="M3 18 L8 10 L12 6 L19 4 L20 9 L14 14 L9 16 Z" fill="#f4d8c8" stroke="#b06a20" stroke-width="1.1"/><path d="M8 10 L12 12 M10 8 L14 10" stroke="#b06a20" stroke-width="0.8"/></svg>
<svg class="a" style="left:1260px;top:224px;" width="22" height="22" viewBox="0 0 22 22"><path d="M11 10 L20 2" stroke="#444" stroke-width="2.2"/><circle cx="9" cy="13" r="6" fill="#3a3a3a" stroke="#222"/></svg>
<div class="a" style="left:1228px;top:269px;width:38px;height:28px;background:#fff;border:1px solid #b2b2ab;border-top:none;border-left:none;"></div>
<div class="a" style="left:1212px;top:256px;width:37px;height:26px;background:#000;"></div>
<div class="a" style="left:1212px;top:285px;width:8px;height:8px;background:#000;"></div>
<div class="a" style="left:1216px;top:289px;width:8px;height:8px;background:#fff;border:1px solid #aaa;border-top:none;border-left:none;"></div>
<div class="a" style="left:1216px;top:289px;width:4px;height:4px;background:#000;"></div>
<svg class="a" style="left:1254px;top:254px;" width="13" height="14" viewBox="0 0 13 14"><path d="M2 5 L5 2 L5 4 Q10 4 10 9 L12 9 L9 12 L6 9 L8 9 Q8 6 5 6 L5 8 Z" fill="#fff" stroke="#777" stroke-width="0.9"/></svg>
<div class="a" style="left:1128px;top:63px;width:1px;height:300px;background:#fff;"></div>
<div class="a" style="left:1127px;top:364px;width:225px;height:5px;background:linear-gradient(#777,#5c5c5c);border-radius:0 0 5px 5px;"></div>
<div class="a" style="left:1128px;top:363px;width:223px;height:1px;background:#fff;"></div>
<div class="a" style="left:1128px;top:299px;width:223px;height:1px;background:#fff;"></div>
<div class="t" style="left:1132.09px;top:325.50px;font-size:14px;font-weight:400;color:#9a9a96;font-style:italic;transform:scaleX(0.9057);-webkit-text-stroke:0.29px currentColor;">You can drop dockable dialogues here</div>
<div class="a" style="left:1133px;top:317px;width:225px;height:364px;background:#e1e1dc;border:1px solid #4a4a4a;border-radius:6px 6px 4px 4px;box-shadow:1px 2px 7px 1px rgba(0,0,0,0.28);"></div>
<div class="a" style="left:1133px;top:317px;width:225px;height:27px;background:linear-gradient(rgba(138,138,138,0.93),rgba(92,92,92,0.93));border:1px solid #464646;border-bottom:none;border-radius:6px 6px 0 0;box-shadow:inset 0 1px 0 #9c9c9c;"></div>
<div class="t" style="left:1132.09px;top:325.50px;font-size:14px;font-weight:400;color:rgba(40,40,40,0.2);font-style:italic;transform:scaleX(0.9057);-webkit-text-stroke:0.29px currentColor;">You can drop dockable dialogues here</div>
<div class="a" style="left:1140px;top:318px;width:25px;height:20px;border:1px solid #3e3e3e;border-top:none;border-radius:0 0 4px 4px;box-shadow:inset 1px 0 0 rgba(255,255,255,0.18),inset -1px 0 0 rgba(255,255,255,0.18),0 1px 0 rgba(255,255,255,0.18);"></div>
<svg class="a" style="left:1145px;top:321px;" width="15" height="14" viewBox="0 0 15 14"><path d="M3 2.5 L12 11.5 M12 2.5 L3 11.5" stroke="#b0b0b0" stroke-width="1.5"/></svg>
<div class="t" style="left:1212.00px;top:323.00px;font-size:14.5px;font-weight:700;color:#a8a8a8;transform:scaleX(1.0571);-webkit-text-stroke:0.12px currentColor;">Tool Options</div>
<div class="a" style="left:1134px;top:344px;width:223px;height:2px;background:#fff;"></div>
<div class="a" style="left:1135px;top:349px;width:221px;height:1px;background:#a9a79d;"></div>
<div class="a" style="left:1134px;top:346px;width:1px;height:330px;background:#fff;"></div>
<div class="a" style="left:1134px;top:671px;width:223px;height:1px;background:#fff;"></div>
<div class="a" style="left:1133px;top:676px;width:225px;height:5px;background:linear-gradient(#777,#5c5c5c);border-radius:0 0 5px 5px;"></div>
<div class="t" style="left:1136.50px;top:356.60px;font-size:11px;font-weight:700;color:#000;transform:scaleX(1.1762);-webkit-text-stroke:0.09px currentColor;">Paintbrush</div>
<div class="a" style="left:1339px;top:355px;width:12px;height:12px;border:1px solid #8d8d87;border-radius:2px;background:linear-gradient(#f4f4f1,#dedcd6);"></div>
<svg class="a" style="left:1340px;top:356px;" width="10" height="10" viewBox="0 0 10 10"><path d="M7 2 L2.5 5 L7 8 Z" fill="#3a3a3a"/></svg>
<div class="t" style="left:1136.50px;top:380.00px;font-size:11px;font-weight:400;color:#000;transform:scaleX(1.0978);-webkit-text-stroke:0.23px currentColor;">Mode:</div>
<div class="a" style="left:1185px;top:372px;width:170px;height:26px;border:1px solid;border-color:#fff #a6a59e #a6a59e #fff;border-radius:1px;background:#e1e1dc;"></div>
<div class="t" style="left:1191.40px;top:380.00px;font-size:11px;font-weight:400;color:#000;transform:scaleX(1.1455);-webkit-text-stroke:0.23px currentColor;">Normal</div>
<div class="a" style="left:1332px;top:376px;width:1px;height:18px;background:#a9a9a2;"></div>
<svg class="a" style="left:1338px;top:381px;" width="10" height="6" viewBox="0 0 10 6"><path d="M0.5 0.5 L9 0.5 L4.75 5 Z" fill="#111"/></svg>
<div class="t" style="left:1136.50px;top:406.00px;font-size:11px;font-weight:400;color:#000;transform:scaleX(1.1293);-webkit-text-stroke:0.23px currentColor;">Opacity:</div>
<div class="a" style="left:1187px;top:404px;width:109px;height:14px;background:#c2c2bd;border:1px solid #b0b0a9;border-top-color:#9b9b94;border-bottom-color:#fff;"></div>
<div class="a" style="left:1264px;top:405px;width:32px;height:12px;background:linear-gradient(#efefec,#dfdfda);border:1px solid #b8b8b1;border-radius:1px;box-shadow:inset 1px 1px 0 #fff;"></div>
<svg class="a" style="left:1275px;top:409px;shape-rendering:crispEdges" width="11" height="4" viewBox="0 0 11 4"><rect x="1" y="1" width="2" height="2" fill="#fff"/><rect x="5" y="1" width="2" height="2" fill="#fff"/><rect x="9" y="1" width="2" height="2" fill="#fff"/><rect x="0" y="0" width="2" height="2" fill="#8f8f88"/><rect x="4" y="0" width="2" height="2" fill="#8f8f88"/><rect x="8" y="0" width="2" height="2" fill="#8f8f88"/></svg>
<div class="a" style="left:1300px;top:400px;width:55px;height:22px;background:#fff;border:1px solid #a6a59e;border-bottom-color:#fff;border-right:none;"></div>
<div class="t" style="left:1304.00px;top:406.50px;font-size:11px;font-weight:400;color:#000;transform:scaleX(1.1602);-webkit-text-stroke:0.23px currentColor;">100.0</div>
<div class="a" style="left:1343px;top:400px;width:12px;height:11px;background:linear-gradient(#f2f2ef,#e2e2dd);border:1px solid #b5b5ae;"></div>
<div class="a" style="left:1343px;top:411px;width:12px;height:11px;background:linear-gradient(#f2f2ef,#e2e2dd);border:1px solid #b5b5ae;border-top:none;"></div>
<svg class="a" style="left:1345px;top:403px;" width="8" height="5" viewBox="0 0 8 5"><path d="M0.5 4.5 L4 0.5 L7.5 4.5 Z" fill="#c0c0ba"/></svg>
<svg class="a" style="left:1345px;top:414px;" width="8" height="5" viewBox="0 0 8 5"><path d="M0.5 0.5 L4 4.5 L7.5 0.5 Z" fill="#111"/></svg>
<div class="t" style="left:1136.50px;top:434.90px;font-size:11px;font-weight:400;color:#000;transform:scaleX(1.1249);-webkit-text-stroke:0.23px currentColor;">Brush:</div>
<div class="a" style="left:1185px;top:424px;width:32px;height:32px;border:1px solid #aeada6;border-radius:2px;background:linear-gradient(#f0f0ed,#dcdcd6);box-shadow:inset 1px 1px 0 #fff;"></div>
<div class="a" style="left:1189px;top:428px;width:25px;height:24px;background:#fff;"></div>
<svg class="a" style="left:1189px;top:428px;" width="25" height="24" viewBox="0 0 25 24"><circle cx="11.3" cy="11.5" r="5.6" fill="#000"/><path d="M24 16 L24 24 L16 24 Z" fill="#7e8cf0"/></svg>
<div class="a" style="left:1219px;top:429px;width:136px;height:23px;background:#fff;border:1px solid #a6a59e;border-right:none;border-bottom-color:#fff;"></div>
<div class="t" style="left:1223.00px;top:434.30px;font-size:11px;font-weight:400;color:#000;transform:scaleX(1.1736);-webkit-text-stroke:0.23px currentColor;">Circle (11)</div>
<div class="t" style="left:1136.50px;top:463.70px;font-size:11px;font-weight:400;color:#000;transform:scaleX(1.0650);-webkit-text-stroke:0.23px currentColor;">Scale:</div>
<div class="a" style="left:1187px;top:462px;width:109px;height:14px;background:#c2c2bd;border:1px solid #b0b0a9;border-top-color:#9b9b94;border-bottom-color:#fff;"></div>
<div class="a" style="left:1238px;top:463px;width:31px;height:12px;background:linear-gradient(#efefec,#dfdfda);border:1px solid #b8b8b1;border-radius:1px;box-shadow:inset 1px 1px 0 #fff;"></div>
<svg class="a" style="left:1248px;top:467px;shape-rendering:crispEdges" width="11" height="4" viewBox="0 0 11 4"><rect x="1" y="1" width="2" height="2" fill="#fff"/><rect x="5" y="1" width="2" height="2" fill="#fff"/><rect x="9" y="1" width="2" height="2" fill="#fff"/><rect x="0" y="0" width="2" height="2" fill="#8f8f88"/><rect x="4" y="0" width="2" height="2" fill="#8f8f88"/><rect x="8" y="0" width="2" height="2" fill="#8f8f88"/></svg>
<div class="a" style="left:1300px;top:458px;width:55px;height:22px;background:#fff;border:1px solid #a6a59e;border-bottom-color:#fff;border-right:none;"></div>
<div class="t" style="left:1304.00px;top:464.50px;font-size:11px;font-weight:400;color:#000;transform:scaleX(1.1601);-webkit-text-stroke:0.23px currentColor;">1.00</div>
<div class="a" style="left:1343px;top:458px;width:12px;height:11px;background:linear-gradient(#f2f2ef,#e2e2dd);border:1px solid #b5b5ae;"></div>
<div class="a" style="left:1343px;top:469px;width:12px;height:11px;background:linear-gradient(#f2f2ef,#e2e2dd);border:1px solid #b5b5ae;border-top:none;"></div>
<svg class="a" style="left:1345px;top:461px;" width="8" height="5" viewBox="0 0 8 5"><path d="M0.5 4.5 L4 0.5 L7.5 4.5 Z" fill="#111"/></svg>
<svg class="a" style="left:1345px;top:472px;" width="8" height="5" viewBox="0 0 8 5"><path d="M0.5 0.5 L4 4.5 L7.5 0.5 Z" fill="#111"/></svg>
<svg class="a" style="left:1139px;top:489px;" width="7" height="11" viewBox="0 0 7 11"><path d="M1.5 1 L5.5 5.5 L1.5 10 Z" fill="none" stroke="#222" stroke-width="1.2"/></svg>
<div class="t" style="left:1152.50px;top:489.70px;font-size:11px;font-weight:400;color:#000;transform:scaleX(1.1442);-webkit-text-stroke:0.23px currentColor;">Brush Dynamics</div>
<div class="a" style="left:1138px;top:514px;width:12px;height:12px;background:#fff;border:1px solid #4a4a4a;border-right-color:#d8d8d4;border-bottom-color:#d8d8d4;"></div>
<div class="t" style="left:1155.20px;top:513.80px;font-size:11px;font-weight:400;color:#000;transform:scaleX(1.1184);-webkit-text-stroke:0.23px currentColor;">Fade out</div>
<div class="a" style="left:1138px;top:539px;width:12px;height:12px;background:#fff;border:1px solid #4a4a4a;border-right-color:#d8d8d4;border-bottom-color:#d8d8d4;"></div>
<div class="t" style="left:1155.20px;top:539.00px;font-size:11px;font-weight:400;color:#000;transform:scaleX(1.1179);-webkit-text-stroke:0.23px currentColor;">Apply Jitter</div>
<div class="a" style="left:1138px;top:565px;width:12px;height:12px;background:#fff;border:1px solid #4a4a4a;border-right-color:#d8d8d4;border-bottom-color:#d8d8d4;"></div>
<div class="t" style="left:1154.01px;top:565.00px;font-size:11px;font-weight:400;color:#000;transform:scaleX(1.1869);-webkit-text-stroke:0.23px currentColor;">Incremental</div>
<div class="a" style="left:1138px;top:589px;width:12px;height:12px;background:#fff;border:1px solid #4a4a4a;border-right-color:#d8d8d4;border-bottom-color:#d8d8d4;"></div>
<div class="t" style="left:1155.20px;top:589.00px;font-size:11px;font-weight:400;color:#000;transform:scaleX(1.1779);-webkit-text-stroke:0.23px currentColor;">Use colour from gradient</div>
<svg class="a" style="left:1153px;top:648px;" width="18" height="17" viewBox="0 0 18 17"><rect x="1.5" y="2.5" width="15" height="12" rx="1" fill="#f0f0ee" stroke="#666"/><rect x="1" y="12" width="16" height="3.5" rx="1" fill="#333"/><path d="M6 1 L12 1 L12 5 L15 5 L9 11 L3 5 L6 5 Z" fill="#8ee04a" stroke="#3a9a10" stroke-width="1"/><path d="M7.5 2.5 L10.5 2.5 L10.5 6 L12 6 L9 9 L6 6 L7.5 6Z" fill="#d8f8b0"/></svg>
<svg class="a" style="left:1209px;top:647px;" width="17" height="18" viewBox="0 0 17 18"><defs><pattern id="dith" width="2" height="2" patternUnits="userSpaceOnUse"><rect width="2" height="2" fill="#f0f0ee"/><rect width="1" height="1" fill="#8a8a88"/><rect x="1" y="1" width="1" height="1" fill="#8a8a88"/></pattern></defs><path d="M1 1 L10 1 L14.5 5.5 L14.5 17 L1 17 Z" fill="url(#dith)"/><path d="M15.5 11.5 Q15 8.5 10 9 L10 7 L5.5 11 L10 15 L10 13 Q13 12.5 15.5 11.5Z" fill="#e8d890" stroke="#b8a040" stroke-width="0.8"/></svg>
<svg class="a" style="left:1263px;top:647px;" width="17" height="18" viewBox="0 0 17 18"><path d="M2 5 L3.5 16 Q8.5 18 13.5 16 L15 5 Z" fill="url(#dith)"/><ellipse cx="8.5" cy="4.5" rx="7" ry="3.5" fill="url(#dith)"/><ellipse cx="8.5" cy="4" rx="2.5" ry="1.2" fill="#333"/></svg>
<svg class="a" style="left:1319px;top:647px;" width="19" height="18" viewBox="0 0 19 18"><path d="M8 2.5 L16.5 2.5 L16.5 14.5 L7 14.5" stroke="#b89a10" stroke-width="4" fill="none"/><path d="M8 2.5 L16.5 2.5 L16.5 14.5 L7 14.5" stroke="#f0d820" stroke-width="2.2" fill="none"/><path d="M1 5.5 L6.5 1 L6.5 10 Z" fill="#f0d820" stroke="#b89a10" stroke-width="0.8"/><circle cx="5" cy="14.5" r="2.8" fill="#3a64b0" stroke="#1a3a80" stroke-width="0.6"/></svg>
</body></html>
